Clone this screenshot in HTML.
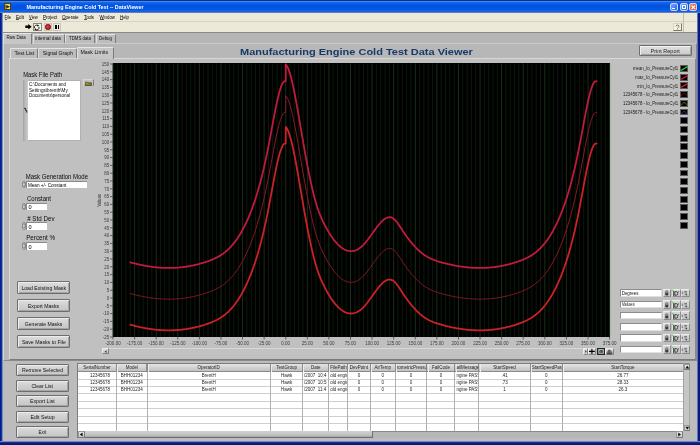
<!DOCTYPE html><html><head><meta charset="utf-8"><style>
*{margin:0;padding:0;box-sizing:border-box}
html,body{width:700px;height:445px;overflow:hidden;background:#bcbcbc;font-family:"Liberation Sans",sans-serif}
div,svg{position:absolute}
text{white-space:pre}
</style></head><body>
<div style="left:0.00px;top:0.00px;width:700.00px;height:13.00px;background:linear-gradient(#002c88 0px,#0a3498 0.7px,#3a88f0 1.5px,#1462e8 2.6px,#0052e0 6px,#0056e6 9.4px,#0a66f6 10.7px,#2a5ab8 11.9px,#8a9cc8 13px)"></div>
<div style="left:3.50px;top:2.50px;width:7.50px;height:7.50px;background:#f0e060;border:0.6px solid #504000"></div>
<svg style="left:3.5px;top:2.5px" width="7.5" height="7.5"><path d="M1.5 1.5L6 3.8L1.5 6z" fill="#202020"/><path d="M2.2 2.8h1.2M2.2 4.8h1.2" stroke="#f0e060" stroke-width="0.5"/></svg>
<div style="left:669.50px;top:2.60px;width:8.30px;height:8.60px;background:linear-gradient(135deg,#7aa6ff,#2a5ee8);border:0.7px solid #c8d8f8;border-radius:2px"></div>
<div style="left:671.50px;top:8.00px;width:3.00px;height:1.00px;background:#fff"></div>
<div style="left:679.50px;top:2.60px;width:8.30px;height:8.60px;background:linear-gradient(135deg,#7aa6ff,#2a5ee8);border:0.7px solid #c8d8f8;border-radius:2px"></div>
<div style="left:681.50px;top:4.50px;width:4.50px;height:4.50px;border:0.8px solid #fff;border-top-width:1.5px"></div>
<div style="left:689.00px;top:2.60px;width:8.30px;height:8.60px;background:linear-gradient(135deg,#f09070,#d04828);border:0.7px solid #c8d8f8;border-radius:2px"></div>
<svg style="left:690px;top:3.5px" width="7" height="7"><path d="M1.6 1.6L5.2 5.2M5.2 1.6L1.6 5.2" stroke="#fff" stroke-width="1.2"/></svg>
<div style="left:0.00px;top:13.00px;width:3.00px;height:432.00px;background:linear-gradient(90deg,#001a78 0%,#0628a0 45%,#3a5cc0 70%,#c8c6c0 100%)"></div>
<div style="left:696.50px;top:13.00px;width:3.50px;height:432.00px;background:linear-gradient(90deg,#b0bce4 0%,#4058b0 22%,#0c1c80 45%,#081670 100%)"></div>
<div style="left:0.00px;top:441.00px;width:700.00px;height:4.00px;background:linear-gradient(#b0bce4 0%,#4058b0 22%,#0c1c80 45%,#081670 100%)"></div>
<div style="left:3.00px;top:13.00px;width:694.00px;height:19.00px;background:#ece9d8"></div>
<div style="left:3.00px;top:21.20px;width:694.00px;height:0.90px;background:#d8d4c2"></div>
<div style="left:4.80px;top:19.20px;width:2.60px;height:0.50px;background:#555"></div>
<div style="left:16.20px;top:19.20px;width:2.60px;height:0.50px;background:#555"></div>
<div style="left:29.20px;top:19.20px;width:3.20px;height:0.50px;background:#555"></div>
<div style="left:43.20px;top:19.20px;width:2.80px;height:0.50px;background:#555"></div>
<div style="left:62.20px;top:19.20px;width:3.60px;height:0.50px;background:#555"></div>
<div style="left:84.20px;top:19.20px;width:2.80px;height:0.50px;background:#555"></div>
<div style="left:99.60px;top:19.20px;width:4.20px;height:0.50px;background:#555"></div>
<div style="left:120.20px;top:19.20px;width:3.00px;height:0.50px;background:#555"></div>
<div style="left:3.00px;top:31.50px;width:694.00px;height:1.00px;background:#8c8a80"></div>
<div style="left:682.50px;top:13.00px;width:1.00px;height:18.50px;background:#c4c0ac"></div>
<svg style="left:24.8px;top:24.3px" width="7" height="5.5"><path d="M0.3 1.5h3v-1.4l3.4 2.65-3.4 2.65v-1.4h-3z" fill="#000"/></svg>
<div style="left:32.50px;top:23.00px;width:9.00px;height:8.20px;background:#f6f4ee;border:0.8px solid #8a8878"></div>
<svg style="left:33.3px;top:23.8px" width="7.5" height="7"><path d="M1.6 4.2A2.2 2.2 0 0 1 5 1.6" fill="none" stroke="#111" stroke-width="0.9"/><path d="M5.9 2.8A2.2 2.2 0 0 1 2.5 5.4" fill="none" stroke="#111" stroke-width="0.9"/><path d="M4.2 0.6L6.2 1.4L4.6 2.8z" fill="#111"/><path d="M3.3 6.4L1.3 5.6L2.9 4.2z" fill="#111"/></svg>
<div style="left:43.50px;top:23.00px;width:8.70px;height:8.20px;background:#eeece2;border:0.8px solid #c8c6b6"></div>
<div style="left:45.30px;top:24.40px;width:5.30px;height:5.30px;background:radial-gradient(circle at 40% 40%,#f04040,#c00000);border-radius:50%;border:0.5px solid #600"></div>
<div style="left:52.80px;top:23.00px;width:8.20px;height:8.20px;background:#eeece2;border:0.8px solid #c8c6b6"></div>
<div style="left:55.00px;top:24.90px;width:1.60px;height:4.60px;background:#000"></div>
<div style="left:57.60px;top:24.90px;width:1.60px;height:4.60px;background:#000"></div>
<div style="left:673.00px;top:22.70px;width:9.00px;height:8.60px;background:#f4f2e8;border:0.7px solid #d8d6c8;border-right-color:#7a7868;border-bottom-color:#7a7868"></div>
<svg style="left:674px;top:23.5px" width="7" height="7"><path d="M2 2.5a1.5 1.5 0 0 1 3 0c0 1-1.5 1-1.5 2.2M3.5 5.6v0.9" fill="none" stroke="#707020" stroke-width="0.9"/></svg>
<div style="left:3.00px;top:32.50px;width:694.00px;height:10.50px;background:#b5b5b5"></div>
<div style="left:2.50px;top:42.80px;width:694.00px;height:317.80px;background:#b7b7b7;border-top:1px solid #cbcbcb;border-left:1px solid #d6d6d6;border-right:1px solid #8a8a8a;border-bottom:1px solid #8a8a8a"></div>
<div style="left:32.50px;top:34.00px;width:32.00px;height:9.00px;background:#bdbdbd;border-top:1px solid #e6e6e6;border-left:1px solid #e0e0e0;border-right:1px solid #7c7c7c;border-radius:1px 1px 0 0"></div>
<div style="left:65.00px;top:34.00px;width:30.00px;height:9.00px;background:#bdbdbd;border-top:1px solid #e6e6e6;border-left:1px solid #e0e0e0;border-right:1px solid #7c7c7c;border-radius:1px 1px 0 0"></div>
<div style="left:95.50px;top:34.00px;width:20.50px;height:9.00px;background:#bdbdbd;border-top:1px solid #e6e6e6;border-left:1px solid #e0e0e0;border-right:1px solid #7c7c7c;border-radius:1px 1px 0 0"></div>
<div style="left:2.50px;top:33.30px;width:29.50px;height:10.50px;background:#c6c6c6;border-top:1px solid #e6e6e6;border-left:1px solid #e0e0e0;border-right:1px solid #7c7c7c;border-radius:1px 1px 0 0"></div>
<div style="left:9.00px;top:57.80px;width:687.00px;height:302.00px;background:#c0c0c0;border-top:1px solid #d8d8d8;border-left:1px solid #d8d8d8;border-right:1px solid #8a8a8a;border-bottom:1px solid #7a7a7a"></div>
<div style="left:10.30px;top:48.00px;width:27.50px;height:10.00px;background:#bdbdbd;border-top:1px solid #e6e6e6;border-left:1px solid #e0e0e0;border-right:1px solid #7c7c7c;border-radius:1px 1px 0 0"></div>
<div style="left:38.00px;top:48.00px;width:38.50px;height:10.00px;background:#bdbdbd;border-top:1px solid #e6e6e6;border-left:1px solid #e0e0e0;border-right:1px solid #7c7c7c;border-radius:1px 1px 0 0"></div>
<div style="left:77.00px;top:47.00px;width:36.50px;height:11.50px;background:#c6c6c6;border-top:1px solid #e6e6e6;border-left:1px solid #e0e0e0;border-right:1px solid #7c7c7c;border-radius:1px 1px 0 0"></div>
<div style="left:24.00px;top:80.00px;width:56.50px;height:60.50px;background:#fff;border:0.8px solid #b0b0b0;border-left:none"></div>
<div style="left:23.40px;top:80.00px;width:5.00px;height:60.50px;background:linear-gradient(90deg,#a0a0a0 0%,#b4b4b4 30%,#c2c2c2 70%,#cacaca 100%)"></div>
<svg style="left:23.4px;top:106px" width="5" height="8"><path d="M1.6 2.2L2.6 2.6L2.6 4.2L3.6 4.8L3.8 6.2" fill="none" stroke="#303030" stroke-width="1.1" stroke-linecap="round"/></svg>
<div style="left:83.00px;top:79.40px;width:10.80px;height:6.90px;background:#c2c2c2;border-top:0.6px solid #d6d6d6;border-left:0.6px solid #d6d6d6;border-right:0.8px solid #7c7c7c;border-bottom:0.6px solid #a8a8a8"></div>
<svg style="left:84.6px;top:80.6px" width="7.5" height="5"><path d="M0.6 1.2h2l0.6 0.6h3.2v2.8h-5.8z" fill="#8a8420" stroke="#2a2a08" stroke-width="0.6"/><path d="M1.2 2.2h1.2" stroke="#d8d070" stroke-width="0.7"/></svg>
<div style="left:21.70px;top:181.40px;width:4.00px;height:6.90px;background:linear-gradient(90deg,#e4e4e4,#b4b4b4);border:0.6px solid #8c8c8c;border-radius:2px"></div>
<svg style="left:21.7px;top:181.4px" width="4" height="6.9"><path d="M0.8 2.85L2 1.25L3.2 2.85M0.8 4.05L2 5.65L3.2 4.05" fill="none" stroke="#666" stroke-width="0.55"/></svg>
<div style="left:26.40px;top:181.40px;width:61.00px;height:6.90px;background:#fff;border-top:0.7px solid #8a8a8a;border-left:0.7px solid #8a8a8a"></div>
<div style="left:21.70px;top:202.60px;width:4.00px;height:7.60px;background:linear-gradient(90deg,#e4e4e4,#b4b4b4);border:0.6px solid #8c8c8c;border-radius:2px"></div>
<svg style="left:21.7px;top:202.6px" width="4" height="7.6"><path d="M0.8 3.1999999999999997L2 1.5999999999999996L3.2 3.1999999999999997M0.8 4.3999999999999995L2 6.0L3.2 4.3999999999999995" fill="none" stroke="#666" stroke-width="0.55"/></svg>
<div style="left:26.40px;top:202.60px;width:21.00px;height:7.60px;background:#fff;border-top:0.7px solid #8a8a8a;border-left:0.7px solid #8a8a8a"></div>
<div style="left:21.70px;top:222.20px;width:4.00px;height:7.60px;background:linear-gradient(90deg,#e4e4e4,#b4b4b4);border:0.6px solid #8c8c8c;border-radius:2px"></div>
<svg style="left:21.7px;top:222.2px" width="4" height="7.6"><path d="M0.8 3.1999999999999997L2 1.5999999999999996L3.2 3.1999999999999997M0.8 4.3999999999999995L2 6.0L3.2 4.3999999999999995" fill="none" stroke="#666" stroke-width="0.55"/></svg>
<div style="left:26.40px;top:222.20px;width:21.00px;height:7.60px;background:#fff;border-top:0.7px solid #8a8a8a;border-left:0.7px solid #8a8a8a"></div>
<div style="left:21.70px;top:242.20px;width:4.00px;height:7.60px;background:linear-gradient(90deg,#e4e4e4,#b4b4b4);border:0.6px solid #8c8c8c;border-radius:2px"></div>
<svg style="left:21.7px;top:242.2px" width="4" height="7.6"><path d="M0.8 3.1999999999999997L2 1.5999999999999996L3.2 3.1999999999999997M0.8 4.3999999999999995L2 6.0L3.2 4.3999999999999995" fill="none" stroke="#666" stroke-width="0.55"/></svg>
<div style="left:26.40px;top:242.20px;width:21.00px;height:7.60px;background:#fff;border-top:0.7px solid #8a8a8a;border-left:0.7px solid #8a8a8a"></div>
<div style="left:17.10px;top:281.40px;width:53.40px;height:12.20px;background:linear-gradient(#dedede,#cfcfcf 50%,#c6c6c6);border:1px solid #6e6e6e;border-radius:1px;box-shadow:inset 1px 1px 0 #ececec,inset -1px -1px 0 #a4a4a4"></div>
<div style="left:17.10px;top:299.30px;width:53.40px;height:12.40px;background:linear-gradient(#dedede,#cfcfcf 50%,#c6c6c6);border:1px solid #6e6e6e;border-radius:1px;box-shadow:inset 1px 1px 0 #ececec,inset -1px -1px 0 #a4a4a4"></div>
<div style="left:17.10px;top:317.40px;width:53.40px;height:12.40px;background:linear-gradient(#dedede,#cfcfcf 50%,#c6c6c6);border:1px solid #6e6e6e;border-radius:1px;box-shadow:inset 1px 1px 0 #ececec,inset -1px -1px 0 #a4a4a4"></div>
<div style="left:17.10px;top:335.20px;width:53.40px;height:12.60px;background:linear-gradient(#dedede,#cfcfcf 50%,#c6c6c6);border:1px solid #6e6e6e;border-radius:1px;box-shadow:inset 1px 1px 0 #ececec,inset -1px -1px 0 #a4a4a4"></div>
<div style="left:16.20px;top:364.10px;width:52.60px;height:12.20px;background:linear-gradient(#dedede,#cfcfcf 50%,#c6c6c6);border:1px solid #6e6e6e;border-radius:1px;box-shadow:inset 1px 1px 0 #ececec,inset -1px -1px 0 #a4a4a4"></div>
<div style="left:16.20px;top:379.70px;width:52.60px;height:12.10px;background:linear-gradient(#dedede,#cfcfcf 50%,#c6c6c6);border:1px solid #6e6e6e;border-radius:1px;box-shadow:inset 1px 1px 0 #ececec,inset -1px -1px 0 #a4a4a4"></div>
<div style="left:16.20px;top:395.00px;width:52.60px;height:12.20px;background:linear-gradient(#dedede,#cfcfcf 50%,#c6c6c6);border:1px solid #6e6e6e;border-radius:1px;box-shadow:inset 1px 1px 0 #ececec,inset -1px -1px 0 #a4a4a4"></div>
<div style="left:16.20px;top:410.70px;width:52.60px;height:12.10px;background:linear-gradient(#dedede,#cfcfcf 50%,#c6c6c6);border:1px solid #6e6e6e;border-radius:1px;box-shadow:inset 1px 1px 0 #ececec,inset -1px -1px 0 #a4a4a4"></div>
<div style="left:16.20px;top:425.90px;width:52.60px;height:12.10px;background:linear-gradient(#dedede,#cfcfcf 50%,#c6c6c6);border:1px solid #6e6e6e;border-radius:1px;box-shadow:inset 1px 1px 0 #ececec,inset -1px -1px 0 #a4a4a4"></div>
<div style="left:112.80px;top:63.30px;width:496.80px;height:273.70px;background:#000"></div>
<svg style="left:0;top:0" width="700" height="445">
<clipPath id="pc"><rect x="112.8" y="63.3" width="496.80" height="273.70"/></clipPath>
<line x1="113.00" y1="63.3" x2="113.00" y2="337.0" stroke="#182f18" stroke-width="1"/>
<line x1="117.32" y1="63.3" x2="117.32" y2="337.0" stroke="#0b190b" stroke-width="1"/>
<line x1="121.64" y1="63.3" x2="121.64" y2="337.0" stroke="#0b190b" stroke-width="1"/>
<line x1="125.95" y1="63.3" x2="125.95" y2="337.0" stroke="#0b190b" stroke-width="1"/>
<line x1="130.27" y1="63.3" x2="130.27" y2="337.0" stroke="#0b190b" stroke-width="1"/>
<line x1="134.59" y1="63.3" x2="134.59" y2="337.0" stroke="#182f18" stroke-width="1"/>
<line x1="138.91" y1="63.3" x2="138.91" y2="337.0" stroke="#0b190b" stroke-width="1"/>
<line x1="143.23" y1="63.3" x2="143.23" y2="337.0" stroke="#0b190b" stroke-width="1"/>
<line x1="147.55" y1="63.3" x2="147.55" y2="337.0" stroke="#0b190b" stroke-width="1"/>
<line x1="151.86" y1="63.3" x2="151.86" y2="337.0" stroke="#0b190b" stroke-width="1"/>
<line x1="156.18" y1="63.3" x2="156.18" y2="337.0" stroke="#182f18" stroke-width="1"/>
<line x1="160.50" y1="63.3" x2="160.50" y2="337.0" stroke="#0b190b" stroke-width="1"/>
<line x1="164.82" y1="63.3" x2="164.82" y2="337.0" stroke="#0b190b" stroke-width="1"/>
<line x1="169.14" y1="63.3" x2="169.14" y2="337.0" stroke="#0b190b" stroke-width="1"/>
<line x1="173.46" y1="63.3" x2="173.46" y2="337.0" stroke="#0b190b" stroke-width="1"/>
<line x1="177.77" y1="63.3" x2="177.77" y2="337.0" stroke="#182f18" stroke-width="1"/>
<line x1="182.09" y1="63.3" x2="182.09" y2="337.0" stroke="#0b190b" stroke-width="1"/>
<line x1="186.41" y1="63.3" x2="186.41" y2="337.0" stroke="#0b190b" stroke-width="1"/>
<line x1="190.73" y1="63.3" x2="190.73" y2="337.0" stroke="#0b190b" stroke-width="1"/>
<line x1="195.05" y1="63.3" x2="195.05" y2="337.0" stroke="#0b190b" stroke-width="1"/>
<line x1="199.37" y1="63.3" x2="199.37" y2="337.0" stroke="#182f18" stroke-width="1"/>
<line x1="203.68" y1="63.3" x2="203.68" y2="337.0" stroke="#0b190b" stroke-width="1"/>
<line x1="208.00" y1="63.3" x2="208.00" y2="337.0" stroke="#0b190b" stroke-width="1"/>
<line x1="212.32" y1="63.3" x2="212.32" y2="337.0" stroke="#0b190b" stroke-width="1"/>
<line x1="216.64" y1="63.3" x2="216.64" y2="337.0" stroke="#0b190b" stroke-width="1"/>
<line x1="220.96" y1="63.3" x2="220.96" y2="337.0" stroke="#182f18" stroke-width="1"/>
<line x1="225.27" y1="63.3" x2="225.27" y2="337.0" stroke="#0b190b" stroke-width="1"/>
<line x1="229.59" y1="63.3" x2="229.59" y2="337.0" stroke="#0b190b" stroke-width="1"/>
<line x1="233.91" y1="63.3" x2="233.91" y2="337.0" stroke="#0b190b" stroke-width="1"/>
<line x1="238.23" y1="63.3" x2="238.23" y2="337.0" stroke="#0b190b" stroke-width="1"/>
<line x1="242.55" y1="63.3" x2="242.55" y2="337.0" stroke="#182f18" stroke-width="1"/>
<line x1="246.87" y1="63.3" x2="246.87" y2="337.0" stroke="#0b190b" stroke-width="1"/>
<line x1="251.18" y1="63.3" x2="251.18" y2="337.0" stroke="#0b190b" stroke-width="1"/>
<line x1="255.50" y1="63.3" x2="255.50" y2="337.0" stroke="#0b190b" stroke-width="1"/>
<line x1="259.82" y1="63.3" x2="259.82" y2="337.0" stroke="#0b190b" stroke-width="1"/>
<line x1="264.14" y1="63.3" x2="264.14" y2="337.0" stroke="#182f18" stroke-width="1"/>
<line x1="268.46" y1="63.3" x2="268.46" y2="337.0" stroke="#0b190b" stroke-width="1"/>
<line x1="272.78" y1="63.3" x2="272.78" y2="337.0" stroke="#0b190b" stroke-width="1"/>
<line x1="277.09" y1="63.3" x2="277.09" y2="337.0" stroke="#0b190b" stroke-width="1"/>
<line x1="281.41" y1="63.3" x2="281.41" y2="337.0" stroke="#0b190b" stroke-width="1"/>
<line x1="285.73" y1="63.3" x2="285.73" y2="337.0" stroke="#182f18" stroke-width="1"/>
<line x1="290.05" y1="63.3" x2="290.05" y2="337.0" stroke="#0b190b" stroke-width="1"/>
<line x1="294.37" y1="63.3" x2="294.37" y2="337.0" stroke="#0b190b" stroke-width="1"/>
<line x1="298.69" y1="63.3" x2="298.69" y2="337.0" stroke="#0b190b" stroke-width="1"/>
<line x1="303.00" y1="63.3" x2="303.00" y2="337.0" stroke="#0b190b" stroke-width="1"/>
<line x1="307.32" y1="63.3" x2="307.32" y2="337.0" stroke="#182f18" stroke-width="1"/>
<line x1="311.64" y1="63.3" x2="311.64" y2="337.0" stroke="#0b190b" stroke-width="1"/>
<line x1="315.96" y1="63.3" x2="315.96" y2="337.0" stroke="#0b190b" stroke-width="1"/>
<line x1="320.28" y1="63.3" x2="320.28" y2="337.0" stroke="#0b190b" stroke-width="1"/>
<line x1="324.59" y1="63.3" x2="324.59" y2="337.0" stroke="#0b190b" stroke-width="1"/>
<line x1="328.91" y1="63.3" x2="328.91" y2="337.0" stroke="#182f18" stroke-width="1"/>
<line x1="333.23" y1="63.3" x2="333.23" y2="337.0" stroke="#0b190b" stroke-width="1"/>
<line x1="337.55" y1="63.3" x2="337.55" y2="337.0" stroke="#0b190b" stroke-width="1"/>
<line x1="341.87" y1="63.3" x2="341.87" y2="337.0" stroke="#0b190b" stroke-width="1"/>
<line x1="346.19" y1="63.3" x2="346.19" y2="337.0" stroke="#0b190b" stroke-width="1"/>
<line x1="350.50" y1="63.3" x2="350.50" y2="337.0" stroke="#182f18" stroke-width="1"/>
<line x1="354.82" y1="63.3" x2="354.82" y2="337.0" stroke="#0b190b" stroke-width="1"/>
<line x1="359.14" y1="63.3" x2="359.14" y2="337.0" stroke="#0b190b" stroke-width="1"/>
<line x1="363.46" y1="63.3" x2="363.46" y2="337.0" stroke="#0b190b" stroke-width="1"/>
<line x1="367.78" y1="63.3" x2="367.78" y2="337.0" stroke="#0b190b" stroke-width="1"/>
<line x1="372.10" y1="63.3" x2="372.10" y2="337.0" stroke="#182f18" stroke-width="1"/>
<line x1="376.41" y1="63.3" x2="376.41" y2="337.0" stroke="#0b190b" stroke-width="1"/>
<line x1="380.73" y1="63.3" x2="380.73" y2="337.0" stroke="#0b190b" stroke-width="1"/>
<line x1="385.05" y1="63.3" x2="385.05" y2="337.0" stroke="#0b190b" stroke-width="1"/>
<line x1="389.37" y1="63.3" x2="389.37" y2="337.0" stroke="#0b190b" stroke-width="1"/>
<line x1="393.69" y1="63.3" x2="393.69" y2="337.0" stroke="#182f18" stroke-width="1"/>
<line x1="398.01" y1="63.3" x2="398.01" y2="337.0" stroke="#0b190b" stroke-width="1"/>
<line x1="402.32" y1="63.3" x2="402.32" y2="337.0" stroke="#0b190b" stroke-width="1"/>
<line x1="406.64" y1="63.3" x2="406.64" y2="337.0" stroke="#0b190b" stroke-width="1"/>
<line x1="410.96" y1="63.3" x2="410.96" y2="337.0" stroke="#0b190b" stroke-width="1"/>
<line x1="415.28" y1="63.3" x2="415.28" y2="337.0" stroke="#182f18" stroke-width="1"/>
<line x1="419.60" y1="63.3" x2="419.60" y2="337.0" stroke="#0b190b" stroke-width="1"/>
<line x1="423.91" y1="63.3" x2="423.91" y2="337.0" stroke="#0b190b" stroke-width="1"/>
<line x1="428.23" y1="63.3" x2="428.23" y2="337.0" stroke="#0b190b" stroke-width="1"/>
<line x1="432.55" y1="63.3" x2="432.55" y2="337.0" stroke="#0b190b" stroke-width="1"/>
<line x1="436.87" y1="63.3" x2="436.87" y2="337.0" stroke="#182f18" stroke-width="1"/>
<line x1="441.19" y1="63.3" x2="441.19" y2="337.0" stroke="#0b190b" stroke-width="1"/>
<line x1="445.51" y1="63.3" x2="445.51" y2="337.0" stroke="#0b190b" stroke-width="1"/>
<line x1="449.82" y1="63.3" x2="449.82" y2="337.0" stroke="#0b190b" stroke-width="1"/>
<line x1="454.14" y1="63.3" x2="454.14" y2="337.0" stroke="#0b190b" stroke-width="1"/>
<line x1="458.46" y1="63.3" x2="458.46" y2="337.0" stroke="#182f18" stroke-width="1"/>
<line x1="462.78" y1="63.3" x2="462.78" y2="337.0" stroke="#0b190b" stroke-width="1"/>
<line x1="467.10" y1="63.3" x2="467.10" y2="337.0" stroke="#0b190b" stroke-width="1"/>
<line x1="471.42" y1="63.3" x2="471.42" y2="337.0" stroke="#0b190b" stroke-width="1"/>
<line x1="475.73" y1="63.3" x2="475.73" y2="337.0" stroke="#0b190b" stroke-width="1"/>
<line x1="480.05" y1="63.3" x2="480.05" y2="337.0" stroke="#182f18" stroke-width="1"/>
<line x1="484.37" y1="63.3" x2="484.37" y2="337.0" stroke="#0b190b" stroke-width="1"/>
<line x1="488.69" y1="63.3" x2="488.69" y2="337.0" stroke="#0b190b" stroke-width="1"/>
<line x1="493.01" y1="63.3" x2="493.01" y2="337.0" stroke="#0b190b" stroke-width="1"/>
<line x1="497.33" y1="63.3" x2="497.33" y2="337.0" stroke="#0b190b" stroke-width="1"/>
<line x1="501.64" y1="63.3" x2="501.64" y2="337.0" stroke="#182f18" stroke-width="1"/>
<line x1="505.96" y1="63.3" x2="505.96" y2="337.0" stroke="#0b190b" stroke-width="1"/>
<line x1="510.28" y1="63.3" x2="510.28" y2="337.0" stroke="#0b190b" stroke-width="1"/>
<line x1="514.60" y1="63.3" x2="514.60" y2="337.0" stroke="#0b190b" stroke-width="1"/>
<line x1="518.92" y1="63.3" x2="518.92" y2="337.0" stroke="#0b190b" stroke-width="1"/>
<line x1="523.23" y1="63.3" x2="523.23" y2="337.0" stroke="#182f18" stroke-width="1"/>
<line x1="527.55" y1="63.3" x2="527.55" y2="337.0" stroke="#0b190b" stroke-width="1"/>
<line x1="531.87" y1="63.3" x2="531.87" y2="337.0" stroke="#0b190b" stroke-width="1"/>
<line x1="536.19" y1="63.3" x2="536.19" y2="337.0" stroke="#0b190b" stroke-width="1"/>
<line x1="540.51" y1="63.3" x2="540.51" y2="337.0" stroke="#0b190b" stroke-width="1"/>
<line x1="544.83" y1="63.3" x2="544.83" y2="337.0" stroke="#182f18" stroke-width="1"/>
<line x1="549.14" y1="63.3" x2="549.14" y2="337.0" stroke="#0b190b" stroke-width="1"/>
<line x1="553.46" y1="63.3" x2="553.46" y2="337.0" stroke="#0b190b" stroke-width="1"/>
<line x1="557.78" y1="63.3" x2="557.78" y2="337.0" stroke="#0b190b" stroke-width="1"/>
<line x1="562.10" y1="63.3" x2="562.10" y2="337.0" stroke="#0b190b" stroke-width="1"/>
<line x1="566.42" y1="63.3" x2="566.42" y2="337.0" stroke="#182f18" stroke-width="1"/>
<line x1="570.74" y1="63.3" x2="570.74" y2="337.0" stroke="#0b190b" stroke-width="1"/>
<line x1="575.05" y1="63.3" x2="575.05" y2="337.0" stroke="#0b190b" stroke-width="1"/>
<line x1="579.37" y1="63.3" x2="579.37" y2="337.0" stroke="#0b190b" stroke-width="1"/>
<line x1="583.69" y1="63.3" x2="583.69" y2="337.0" stroke="#0b190b" stroke-width="1"/>
<line x1="588.01" y1="63.3" x2="588.01" y2="337.0" stroke="#182f18" stroke-width="1"/>
<line x1="592.33" y1="63.3" x2="592.33" y2="337.0" stroke="#0b190b" stroke-width="1"/>
<line x1="596.65" y1="63.3" x2="596.65" y2="337.0" stroke="#0b190b" stroke-width="1"/>
<line x1="600.96" y1="63.3" x2="600.96" y2="337.0" stroke="#0b190b" stroke-width="1"/>
<line x1="605.28" y1="63.3" x2="605.28" y2="337.0" stroke="#0b190b" stroke-width="1"/>
<line x1="609.60" y1="63.3" x2="609.60" y2="337.0" stroke="#182f18" stroke-width="1"/>
<g clip-path="url(#pc)" fill="none" stroke-linejoin="round" stroke-linecap="round">
<path d="M130.27 293.50 L131.14 293.74 L132.00 293.98 L132.86 294.21 L133.73 294.44 L134.59 294.66 L135.45 294.88 L136.32 295.09 L137.18 295.30 L138.05 295.50 L138.91 295.69 L139.77 295.89 L140.64 296.07 L141.50 296.25 L142.36 296.43 L143.23 296.60 L144.09 296.77 L144.96 296.93 L145.82 297.08 L146.68 297.23 L147.55 297.38 L148.41 297.52 L149.27 297.65 L150.14 297.78 L151.00 297.90 L151.86 298.02 L152.73 298.13 L153.59 298.23 L154.46 298.33 L155.32 298.43 L156.18 298.52 L157.05 298.60 L157.91 298.68 L158.77 298.75 L159.64 298.81 L160.50 298.87 L161.36 298.93 L162.23 298.98 L163.09 299.02 L163.96 299.05 L164.82 299.08 L165.68 299.11 L166.55 299.13 L167.41 299.14 L168.27 299.15 L169.14 299.15 L170.00 299.14 L170.86 299.13 L171.73 299.11 L172.59 299.09 L173.46 299.06 L174.32 299.02 L175.18 298.98 L176.05 298.93 L176.91 298.87 L177.77 298.81 L178.64 298.74 L179.50 298.66 L180.36 298.58 L181.23 298.50 L182.09 298.40 L182.96 298.30 L183.82 298.19 L184.68 298.08 L185.55 297.96 L186.41 297.83 L187.27 297.70 L188.14 297.55 L189.00 297.41 L189.87 297.25 L190.73 297.09 L191.59 296.92 L192.46 296.75 L193.32 296.57 L194.18 296.38 L195.05 296.18 L195.91 295.98 L196.77 295.77 L197.64 295.55 L198.50 295.33 L199.37 295.10 L200.23 294.86 L201.09 294.62 L201.96 294.36 L202.82 294.11 L203.68 293.84 L204.55 293.57 L205.41 293.28 L206.27 293.00 L207.14 292.70 L208.00 292.40 L208.87 292.09 L209.73 291.77 L210.59 291.44 L211.46 291.10 L212.32 290.75 L213.18 290.38 L214.05 290.00 L214.91 289.60 L215.77 289.19 L216.64 288.76 L217.50 288.30 L218.37 287.83 L219.23 287.34 L220.09 286.82 L220.96 286.27 L221.82 285.71 L222.68 285.11 L223.55 284.49 L224.41 283.83 L225.27 283.15 L226.14 282.43 L227.00 281.68 L227.87 280.90 L228.73 280.08 L229.59 279.22 L230.46 278.33 L231.32 277.39 L232.18 276.42 L233.05 275.40 L233.91 274.34 L234.77 273.24 L235.64 272.09 L236.50 270.89 L237.37 269.65 L238.23 268.35 L239.09 267.01 L239.96 265.61 L240.82 264.16 L241.68 262.66 L242.55 261.10 L243.41 259.49 L244.28 257.82 L245.14 256.09 L246.00 254.30 L246.87 252.44 L247.73 250.53 L248.59 248.54 L249.46 246.49 L250.32 244.37 L251.18 242.17 L252.05 239.90 L252.91 237.54 L253.78 235.10 L254.64 232.56 L255.50 229.94 L256.37 227.23 L257.23 224.42 L258.09 221.50 L258.96 218.49 L259.82 215.36 L260.68 212.13 L261.55 208.79 L262.41 205.33 L263.28 201.75 L264.14 198.04 L265.00 194.22 L265.87 190.26 L266.73 186.17 L267.59 181.95 L268.46 177.59 L269.32 173.10 L270.18 168.50 L271.05 163.84 L271.91 159.16 L272.78 154.49 L273.64 149.87 L274.50 145.34 L275.37 140.95 L276.23 136.72 L277.09 132.70 L277.96 128.93 L278.82 125.45 L279.68 122.28 L280.55 119.48 L281.41 117.09 L282.28 115.13 L283.14 113.65 L284.00 112.69 L284.87 112.29 L285.73 112.48 L285.73 95.64 L286.59 96.67 L287.46 98.16 L288.32 100.10 L289.19 102.45 L290.05 105.17 L290.91 108.25 L291.78 111.65 L292.64 115.35 L293.50 119.32 L294.37 123.52 L295.23 127.94 L296.09 132.53 L296.96 137.28 L297.82 142.15 L298.69 147.12 L299.55 152.16 L300.41 157.24 L301.28 162.32 L302.14 167.39 L303.00 172.42 L303.87 177.37 L304.73 182.24 L305.59 187.01 L306.46 191.69 L307.32 196.26 L308.19 200.71 L309.05 205.04 L309.91 209.23 L310.78 213.29 L311.64 217.19 L312.50 220.93 L313.37 224.51 L314.23 227.91 L315.09 231.13 L315.96 234.16 L316.82 236.99 L317.69 239.64 L318.55 242.12 L319.41 244.44 L320.28 246.62 L321.14 248.67 L322.00 250.62 L322.87 252.47 L323.73 254.24 L324.59 255.95 L325.46 257.60 L326.32 259.20 L327.19 260.75 L328.05 262.25 L328.91 263.70 L329.78 265.10 L330.64 266.44 L331.50 267.74 L332.37 268.98 L333.23 270.16 L334.09 271.30 L334.96 272.38 L335.82 273.40 L336.69 274.37 L337.55 275.29 L338.41 276.15 L339.28 276.96 L340.14 277.72 L341.00 278.41 L341.87 279.05 L342.73 279.64 L343.60 280.17 L344.46 280.64 L345.32 281.05 L346.19 281.41 L347.05 281.71 L347.91 281.95 L348.78 282.13 L349.64 282.25 L350.50 282.32 L351.37 282.32 L352.23 282.27 L353.10 282.16 L353.96 281.98 L354.82 281.75 L355.69 281.45 L356.55 281.10 L357.41 280.68 L358.28 280.20 L359.14 279.66 L360.00 279.05 L360.87 278.39 L361.73 277.66 L362.60 276.87 L363.46 276.01 L364.32 275.09 L365.19 274.12 L366.05 273.09 L366.91 272.01 L367.78 270.90 L368.64 269.76 L369.50 268.59 L370.37 267.39 L371.23 266.19 L372.10 264.97 L372.96 263.75 L373.82 262.54 L374.69 261.34 L375.55 260.15 L376.41 258.98 L377.28 257.85 L378.14 256.75 L379.00 255.68 L379.87 254.67 L380.73 253.71 L381.60 252.81 L382.46 251.97 L383.32 251.21 L384.19 250.52 L385.05 249.92 L385.91 249.41 L386.78 248.99 L387.64 248.68 L388.51 248.48 L389.37 248.39 L390.23 248.43 L391.10 248.59 L391.96 248.89 L392.82 249.34 L393.69 249.93 L394.55 250.67 L395.41 251.55 L396.28 252.55 L397.14 253.65 L398.01 254.84 L398.87 256.08 L399.73 257.38 L400.60 258.71 L401.46 260.04 L402.32 261.37 L403.19 262.68 L404.05 263.96 L404.91 265.22 L405.78 266.45 L406.64 267.65 L407.51 268.83 L408.37 269.98 L409.23 271.11 L410.10 272.20 L410.96 273.27 L411.82 274.32 L412.69 275.33 L413.55 276.32 L414.41 277.27 L415.28 278.20 L416.14 279.10 L417.01 279.97 L417.87 280.81 L418.73 281.62 L419.60 282.41 L420.46 283.16 L421.32 283.88 L422.19 284.56 L423.05 285.22 L423.91 285.85 L424.78 286.44 L425.64 287.01 L426.51 287.54 L427.37 288.05 L428.23 288.53 L429.10 288.99 L429.96 289.42 L430.82 289.83 L431.69 290.22 L432.55 290.59 L433.41 290.94 L434.28 291.27 L435.14 291.59 L436.01 291.90 L436.87 292.19 L437.73 292.47 L438.60 292.74 L439.46 293.00 L440.32 293.25 L441.19 293.50 L442.05 293.74 L442.92 293.98 L443.78 294.21 L444.64 294.44 L445.51 294.66 L446.37 294.88 L447.23 295.09 L448.10 295.30 L448.96 295.50 L449.82 295.69 L450.69 295.89 L451.55 296.07 L452.42 296.25 L453.28 296.43 L454.14 296.60 L455.01 296.77 L455.87 296.93 L456.73 297.08 L457.60 297.23 L458.46 297.38 L459.32 297.52 L460.19 297.65 L461.05 297.78 L461.92 297.90 L462.78 298.02 L463.64 298.13 L464.51 298.23 L465.37 298.33 L466.23 298.43 L467.10 298.52 L467.96 298.60 L468.82 298.68 L469.69 298.75 L470.55 298.81 L471.42 298.87 L472.28 298.93 L473.14 298.98 L474.01 299.02 L474.87 299.05 L475.73 299.08 L476.60 299.11 L477.46 299.13 L478.32 299.14 L479.19 299.15 L480.05 299.15 L480.92 299.14 L481.78 299.13 L482.64 299.11 L483.51 299.09 L484.37 299.06 L485.23 299.02 L486.10 298.98 L486.96 298.93 L487.83 298.87 L488.69 298.81 L489.55 298.74 L490.42 298.66 L491.28 298.58 L492.14 298.50 L493.01 298.40 L493.87 298.30 L494.73 298.19 L495.60 298.08 L496.46 297.96 L497.33 297.83 L498.19 297.70 L499.05 297.55 L499.92 297.41 L500.78 297.25 L501.64 297.09 L502.51 296.92 L503.37 296.75 L504.23 296.57 L505.10 296.38 L505.96 296.18 L506.83 295.98 L507.69 295.77 L508.55 295.55 L509.42 295.33 L510.28 295.10 L511.14 294.86 L512.01 294.62 L512.87 294.36 L513.73 294.11 L514.60 293.84 L515.46 293.57 L516.33 293.28 L517.19 293.00 L518.05 292.70 L518.92 292.40 L519.78 292.09 L520.64 291.77 L521.51 291.44 L522.37 291.10 L523.23 290.75 L524.10 290.38 L524.96 290.00 L525.83 289.60 L526.69 289.19 L527.55 288.76 L528.42 288.30 L529.28 287.83 L530.14 287.34 L531.01 286.82 L531.87 286.27 L532.73 285.71 L533.60 285.11 L534.46 284.49 L535.33 283.83 L536.19 283.15 L537.05 282.43 L537.92 281.68 L538.78 280.90 L539.64 280.08 L540.51 279.22 L541.37 278.33 L542.24 277.39 L543.10 276.42 L543.96 275.40 L544.83 274.34 L545.69 273.24 L546.55 272.09 L547.42 270.89 L548.28 269.65 L549.14 268.35 L550.01 267.01 L550.87 265.61 L551.74 264.16 L552.60 262.66 L553.46 261.10 L554.33 259.49 L555.19 257.82 L556.05 256.09 L556.92 254.30 L557.78 252.44 L558.64 250.53 L559.51 248.54 L560.37 246.49 L561.24 244.37 L562.10 242.17 L562.96 239.90 L563.83 237.54 L564.69 235.10 L565.55 232.56 L566.42 229.94 L567.28 227.23 L568.14 224.42 L569.01 221.50 L569.87 218.49 L570.74 215.36 L571.60 212.13 L572.46 208.79 L573.33 205.33 L574.19 201.75 L575.05 198.04 L575.92 194.22 L576.78 190.26 L577.64 186.17 L578.51 181.95 L579.37 177.59 L580.24 173.10 L581.10 168.50 L581.96 163.84 L582.83 159.16 L583.69 154.49 L584.55 149.87 L585.42 145.34 L586.28 140.95 L587.15 136.72 L588.01 132.70 L588.87 128.93 L589.74 125.45 L590.60 122.28 L591.46 119.48 L592.33 117.09 L593.19 115.13 L594.05 113.65 L594.92 112.69 L595.78 112.29 L596.65 112.48" stroke="#8a1a24" stroke-width="1.0"/>
<path d="M130.27 262.30 L131.14 262.54 L132.00 262.78 L132.86 263.01 L133.73 263.24 L134.59 263.46 L135.45 263.68 L136.32 263.89 L137.18 264.10 L138.05 264.30 L138.91 264.49 L139.77 264.69 L140.64 264.87 L141.50 265.05 L142.36 265.23 L143.23 265.40 L144.09 265.57 L144.96 265.73 L145.82 265.88 L146.68 266.03 L147.55 266.18 L148.41 266.32 L149.27 266.45 L150.14 266.58 L151.00 266.70 L151.86 266.82 L152.73 266.93 L153.59 267.03 L154.46 267.13 L155.32 267.23 L156.18 267.32 L157.05 267.40 L157.91 267.48 L158.77 267.55 L159.64 267.61 L160.50 267.67 L161.36 267.73 L162.23 267.78 L163.09 267.82 L163.96 267.85 L164.82 267.88 L165.68 267.91 L166.55 267.93 L167.41 267.94 L168.27 267.95 L169.14 267.95 L170.00 267.94 L170.86 267.93 L171.73 267.91 L172.59 267.89 L173.46 267.86 L174.32 267.82 L175.18 267.78 L176.05 267.73 L176.91 267.67 L177.77 267.61 L178.64 267.54 L179.50 267.46 L180.36 267.38 L181.23 267.30 L182.09 267.20 L182.96 267.10 L183.82 266.99 L184.68 266.88 L185.55 266.76 L186.41 266.63 L187.27 266.50 L188.14 266.35 L189.00 266.21 L189.87 266.05 L190.73 265.89 L191.59 265.72 L192.46 265.55 L193.32 265.37 L194.18 265.18 L195.05 264.98 L195.91 264.78 L196.77 264.57 L197.64 264.35 L198.50 264.13 L199.37 263.90 L200.23 263.66 L201.09 263.42 L201.96 263.16 L202.82 262.91 L203.68 262.64 L204.55 262.37 L205.41 262.08 L206.27 261.80 L207.14 261.50 L208.00 261.20 L208.87 260.89 L209.73 260.57 L210.59 260.24 L211.46 259.90 L212.32 259.55 L213.18 259.18 L214.05 258.80 L214.91 258.40 L215.77 257.99 L216.64 257.56 L217.50 257.10 L218.37 256.63 L219.23 256.14 L220.09 255.62 L220.96 255.07 L221.82 254.51 L222.68 253.91 L223.55 253.29 L224.41 252.63 L225.27 251.95 L226.14 251.23 L227.00 250.48 L227.87 249.70 L228.73 248.88 L229.59 248.02 L230.46 247.13 L231.32 246.19 L232.18 245.22 L233.05 244.20 L233.91 243.14 L234.77 242.04 L235.64 240.89 L236.50 239.69 L237.37 238.45 L238.23 237.15 L239.09 235.81 L239.96 234.41 L240.82 232.96 L241.68 231.46 L242.55 229.90 L243.41 228.29 L244.28 226.62 L245.14 224.89 L246.00 223.10 L246.87 221.24 L247.73 219.33 L248.59 217.34 L249.46 215.29 L250.32 213.17 L251.18 210.97 L252.05 208.70 L252.91 206.34 L253.78 203.90 L254.64 201.36 L255.50 198.74 L256.37 196.03 L257.23 193.22 L258.09 190.30 L258.96 187.29 L259.82 184.16 L260.68 180.93 L261.55 177.59 L262.41 174.13 L263.28 170.55 L264.14 166.84 L265.00 163.02 L265.87 159.06 L266.73 154.97 L267.59 150.75 L268.46 146.39 L269.32 141.90 L270.18 137.30 L271.05 132.64 L271.91 127.96 L272.78 123.29 L273.64 118.67 L274.50 114.14 L275.37 109.75 L276.23 105.52 L277.09 101.50 L277.96 97.73 L278.82 94.25 L279.68 91.08 L280.55 88.28 L281.41 85.89 L282.28 83.93 L283.14 82.45 L284.00 81.49 L284.87 81.09 L285.73 81.28 L285.73 64.44 L286.59 65.47 L287.46 66.96 L288.32 68.90 L289.19 71.25 L290.05 73.97 L290.91 77.05 L291.78 80.45 L292.64 84.15 L293.50 88.12 L294.37 92.32 L295.23 96.74 L296.09 101.33 L296.96 106.08 L297.82 110.95 L298.69 115.92 L299.55 120.96 L300.41 126.04 L301.28 131.12 L302.14 136.19 L303.00 141.22 L303.87 146.17 L304.73 151.04 L305.59 155.81 L306.46 160.49 L307.32 165.06 L308.19 169.51 L309.05 173.84 L309.91 178.03 L310.78 182.09 L311.64 185.99 L312.50 189.73 L313.37 193.31 L314.23 196.71 L315.09 199.93 L315.96 202.96 L316.82 205.79 L317.69 208.44 L318.55 210.92 L319.41 213.24 L320.28 215.42 L321.14 217.47 L322.00 219.42 L322.87 221.27 L323.73 223.04 L324.59 224.75 L325.46 226.40 L326.32 228.00 L327.19 229.55 L328.05 231.05 L328.91 232.50 L329.78 233.90 L330.64 235.24 L331.50 236.54 L332.37 237.78 L333.23 238.96 L334.09 240.10 L334.96 241.18 L335.82 242.20 L336.69 243.17 L337.55 244.09 L338.41 244.95 L339.28 245.76 L340.14 246.52 L341.00 247.21 L341.87 247.85 L342.73 248.44 L343.60 248.97 L344.46 249.44 L345.32 249.85 L346.19 250.21 L347.05 250.51 L347.91 250.75 L348.78 250.93 L349.64 251.05 L350.50 251.12 L351.37 251.12 L352.23 251.07 L353.10 250.96 L353.96 250.78 L354.82 250.55 L355.69 250.25 L356.55 249.90 L357.41 249.48 L358.28 249.00 L359.14 248.46 L360.00 247.85 L360.87 247.19 L361.73 246.46 L362.60 245.67 L363.46 244.81 L364.32 243.89 L365.19 242.92 L366.05 241.89 L366.91 240.81 L367.78 239.70 L368.64 238.56 L369.50 237.39 L370.37 236.19 L371.23 234.99 L372.10 233.77 L372.96 232.55 L373.82 231.34 L374.69 230.14 L375.55 228.95 L376.41 227.78 L377.28 226.65 L378.14 225.55 L379.00 224.48 L379.87 223.47 L380.73 222.51 L381.60 221.61 L382.46 220.77 L383.32 220.01 L384.19 219.32 L385.05 218.72 L385.91 218.21 L386.78 217.79 L387.64 217.48 L388.51 217.28 L389.37 217.19 L390.23 217.23 L391.10 217.39 L391.96 217.69 L392.82 218.14 L393.69 218.73 L394.55 219.47 L395.41 220.35 L396.28 221.35 L397.14 222.45 L398.01 223.64 L398.87 224.88 L399.73 226.18 L400.60 227.51 L401.46 228.84 L402.32 230.17 L403.19 231.48 L404.05 232.76 L404.91 234.02 L405.78 235.25 L406.64 236.45 L407.51 237.63 L408.37 238.78 L409.23 239.91 L410.10 241.00 L410.96 242.07 L411.82 243.12 L412.69 244.13 L413.55 245.12 L414.41 246.07 L415.28 247.00 L416.14 247.90 L417.01 248.77 L417.87 249.61 L418.73 250.42 L419.60 251.21 L420.46 251.96 L421.32 252.68 L422.19 253.36 L423.05 254.02 L423.91 254.65 L424.78 255.24 L425.64 255.81 L426.51 256.34 L427.37 256.85 L428.23 257.33 L429.10 257.79 L429.96 258.22 L430.82 258.63 L431.69 259.02 L432.55 259.39 L433.41 259.74 L434.28 260.07 L435.14 260.39 L436.01 260.70 L436.87 260.99 L437.73 261.27 L438.60 261.54 L439.46 261.80 L440.32 262.05 L441.19 262.30 L442.05 262.54 L442.92 262.78 L443.78 263.01 L444.64 263.24 L445.51 263.46 L446.37 263.68 L447.23 263.89 L448.10 264.10 L448.96 264.30 L449.82 264.49 L450.69 264.69 L451.55 264.87 L452.42 265.05 L453.28 265.23 L454.14 265.40 L455.01 265.57 L455.87 265.73 L456.73 265.88 L457.60 266.03 L458.46 266.18 L459.32 266.32 L460.19 266.45 L461.05 266.58 L461.92 266.70 L462.78 266.82 L463.64 266.93 L464.51 267.03 L465.37 267.13 L466.23 267.23 L467.10 267.32 L467.96 267.40 L468.82 267.48 L469.69 267.55 L470.55 267.61 L471.42 267.67 L472.28 267.73 L473.14 267.78 L474.01 267.82 L474.87 267.85 L475.73 267.88 L476.60 267.91 L477.46 267.93 L478.32 267.94 L479.19 267.95 L480.05 267.95 L480.92 267.94 L481.78 267.93 L482.64 267.91 L483.51 267.89 L484.37 267.86 L485.23 267.82 L486.10 267.78 L486.96 267.73 L487.83 267.67 L488.69 267.61 L489.55 267.54 L490.42 267.46 L491.28 267.38 L492.14 267.30 L493.01 267.20 L493.87 267.10 L494.73 266.99 L495.60 266.88 L496.46 266.76 L497.33 266.63 L498.19 266.50 L499.05 266.35 L499.92 266.21 L500.78 266.05 L501.64 265.89 L502.51 265.72 L503.37 265.55 L504.23 265.37 L505.10 265.18 L505.96 264.98 L506.83 264.78 L507.69 264.57 L508.55 264.35 L509.42 264.13 L510.28 263.90 L511.14 263.66 L512.01 263.42 L512.87 263.16 L513.73 262.91 L514.60 262.64 L515.46 262.37 L516.33 262.08 L517.19 261.80 L518.05 261.50 L518.92 261.20 L519.78 260.89 L520.64 260.57 L521.51 260.24 L522.37 259.90 L523.23 259.55 L524.10 259.18 L524.96 258.80 L525.83 258.40 L526.69 257.99 L527.55 257.56 L528.42 257.10 L529.28 256.63 L530.14 256.14 L531.01 255.62 L531.87 255.07 L532.73 254.51 L533.60 253.91 L534.46 253.29 L535.33 252.63 L536.19 251.95 L537.05 251.23 L537.92 250.48 L538.78 249.70 L539.64 248.88 L540.51 248.02 L541.37 247.13 L542.24 246.19 L543.10 245.22 L543.96 244.20 L544.83 243.14 L545.69 242.04 L546.55 240.89 L547.42 239.69 L548.28 238.45 L549.14 237.15 L550.01 235.81 L550.87 234.41 L551.74 232.96 L552.60 231.46 L553.46 229.90 L554.33 228.29 L555.19 226.62 L556.05 224.89 L556.92 223.10 L557.78 221.24 L558.64 219.33 L559.51 217.34 L560.37 215.29 L561.24 213.17 L562.10 210.97 L562.96 208.70 L563.83 206.34 L564.69 203.90 L565.55 201.36 L566.42 198.74 L567.28 196.03 L568.14 193.22 L569.01 190.30 L569.87 187.29 L570.74 184.16 L571.60 180.93 L572.46 177.59 L573.33 174.13 L574.19 170.55 L575.05 166.84 L575.92 163.02 L576.78 159.06 L577.64 154.97 L578.51 150.75 L579.37 146.39 L580.24 141.90 L581.10 137.30 L581.96 132.64 L582.83 127.96 L583.69 123.29 L584.55 118.67 L585.42 114.14 L586.28 109.75 L587.15 105.52 L588.01 101.50 L588.87 97.73 L589.74 94.25 L590.60 91.08 L591.46 88.28 L592.33 85.89 L593.19 83.93 L594.05 82.45 L594.92 81.49 L595.78 81.09 L596.65 81.28" stroke="#c01a3c" stroke-width="1.8"/>
<path d="M130.27 324.70 L131.14 324.94 L132.00 325.18 L132.86 325.41 L133.73 325.64 L134.59 325.86 L135.45 326.08 L136.32 326.29 L137.18 326.50 L138.05 326.70 L138.91 326.89 L139.77 327.09 L140.64 327.27 L141.50 327.45 L142.36 327.63 L143.23 327.80 L144.09 327.97 L144.96 328.13 L145.82 328.28 L146.68 328.43 L147.55 328.58 L148.41 328.72 L149.27 328.85 L150.14 328.98 L151.00 329.10 L151.86 329.22 L152.73 329.33 L153.59 329.43 L154.46 329.53 L155.32 329.63 L156.18 329.72 L157.05 329.80 L157.91 329.88 L158.77 329.95 L159.64 330.01 L160.50 330.07 L161.36 330.13 L162.23 330.18 L163.09 330.22 L163.96 330.25 L164.82 330.28 L165.68 330.31 L166.55 330.33 L167.41 330.34 L168.27 330.35 L169.14 330.35 L170.00 330.34 L170.86 330.33 L171.73 330.31 L172.59 330.29 L173.46 330.26 L174.32 330.22 L175.18 330.18 L176.05 330.13 L176.91 330.07 L177.77 330.01 L178.64 329.94 L179.50 329.86 L180.36 329.78 L181.23 329.70 L182.09 329.60 L182.96 329.50 L183.82 329.39 L184.68 329.28 L185.55 329.16 L186.41 329.03 L187.27 328.90 L188.14 328.75 L189.00 328.61 L189.87 328.45 L190.73 328.29 L191.59 328.12 L192.46 327.95 L193.32 327.77 L194.18 327.58 L195.05 327.38 L195.91 327.18 L196.77 326.97 L197.64 326.75 L198.50 326.53 L199.37 326.30 L200.23 326.06 L201.09 325.82 L201.96 325.56 L202.82 325.31 L203.68 325.04 L204.55 324.77 L205.41 324.48 L206.27 324.20 L207.14 323.90 L208.00 323.60 L208.87 323.29 L209.73 322.97 L210.59 322.64 L211.46 322.30 L212.32 321.95 L213.18 321.58 L214.05 321.20 L214.91 320.80 L215.77 320.39 L216.64 319.96 L217.50 319.50 L218.37 319.03 L219.23 318.54 L220.09 318.02 L220.96 317.47 L221.82 316.91 L222.68 316.31 L223.55 315.69 L224.41 315.03 L225.27 314.35 L226.14 313.63 L227.00 312.88 L227.87 312.10 L228.73 311.28 L229.59 310.42 L230.46 309.53 L231.32 308.59 L232.18 307.62 L233.05 306.60 L233.91 305.54 L234.77 304.44 L235.64 303.29 L236.50 302.09 L237.37 300.85 L238.23 299.55 L239.09 298.21 L239.96 296.81 L240.82 295.36 L241.68 293.86 L242.55 292.30 L243.41 290.69 L244.28 289.02 L245.14 287.29 L246.00 285.50 L246.87 283.64 L247.73 281.73 L248.59 279.74 L249.46 277.69 L250.32 275.57 L251.18 273.37 L252.05 271.10 L252.91 268.74 L253.78 266.30 L254.64 263.76 L255.50 261.14 L256.37 258.43 L257.23 255.62 L258.09 252.70 L258.96 249.69 L259.82 246.56 L260.68 243.33 L261.55 239.99 L262.41 236.53 L263.28 232.95 L264.14 229.24 L265.00 225.42 L265.87 221.46 L266.73 217.37 L267.59 213.15 L268.46 208.79 L269.32 204.30 L270.18 199.70 L271.05 195.04 L271.91 190.36 L272.78 185.69 L273.64 181.07 L274.50 176.54 L275.37 172.15 L276.23 167.92 L277.09 163.90 L277.96 160.13 L278.82 156.65 L279.68 153.48 L280.55 150.68 L281.41 148.29 L282.28 146.33 L283.14 144.85 L284.00 143.89 L284.87 143.49 L285.73 143.68 L285.73 126.84 L286.59 127.87 L287.46 129.36 L288.32 131.30 L289.19 133.65 L290.05 136.37 L290.91 139.45 L291.78 142.85 L292.64 146.55 L293.50 150.52 L294.37 154.72 L295.23 159.14 L296.09 163.73 L296.96 168.48 L297.82 173.35 L298.69 178.32 L299.55 183.36 L300.41 188.44 L301.28 193.52 L302.14 198.59 L303.00 203.62 L303.87 208.57 L304.73 213.44 L305.59 218.21 L306.46 222.89 L307.32 227.46 L308.19 231.91 L309.05 236.24 L309.91 240.43 L310.78 244.49 L311.64 248.39 L312.50 252.13 L313.37 255.71 L314.23 259.11 L315.09 262.33 L315.96 265.36 L316.82 268.19 L317.69 270.84 L318.55 273.32 L319.41 275.64 L320.28 277.82 L321.14 279.87 L322.00 281.82 L322.87 283.67 L323.73 285.44 L324.59 287.15 L325.46 288.80 L326.32 290.40 L327.19 291.95 L328.05 293.45 L328.91 294.90 L329.78 296.30 L330.64 297.64 L331.50 298.94 L332.37 300.18 L333.23 301.36 L334.09 302.50 L334.96 303.58 L335.82 304.60 L336.69 305.57 L337.55 306.49 L338.41 307.35 L339.28 308.16 L340.14 308.92 L341.00 309.61 L341.87 310.25 L342.73 310.84 L343.60 311.37 L344.46 311.84 L345.32 312.25 L346.19 312.61 L347.05 312.91 L347.91 313.15 L348.78 313.33 L349.64 313.45 L350.50 313.52 L351.37 313.52 L352.23 313.47 L353.10 313.36 L353.96 313.18 L354.82 312.95 L355.69 312.65 L356.55 312.30 L357.41 311.88 L358.28 311.40 L359.14 310.86 L360.00 310.25 L360.87 309.59 L361.73 308.86 L362.60 308.07 L363.46 307.21 L364.32 306.29 L365.19 305.32 L366.05 304.29 L366.91 303.21 L367.78 302.10 L368.64 300.96 L369.50 299.79 L370.37 298.59 L371.23 297.39 L372.10 296.17 L372.96 294.95 L373.82 293.74 L374.69 292.54 L375.55 291.35 L376.41 290.18 L377.28 289.05 L378.14 287.95 L379.00 286.88 L379.87 285.87 L380.73 284.91 L381.60 284.01 L382.46 283.17 L383.32 282.41 L384.19 281.72 L385.05 281.12 L385.91 280.61 L386.78 280.19 L387.64 279.88 L388.51 279.68 L389.37 279.59 L390.23 279.63 L391.10 279.79 L391.96 280.09 L392.82 280.54 L393.69 281.13 L394.55 281.87 L395.41 282.75 L396.28 283.75 L397.14 284.85 L398.01 286.04 L398.87 287.28 L399.73 288.58 L400.60 289.91 L401.46 291.24 L402.32 292.57 L403.19 293.88 L404.05 295.16 L404.91 296.42 L405.78 297.65 L406.64 298.85 L407.51 300.03 L408.37 301.18 L409.23 302.31 L410.10 303.40 L410.96 304.47 L411.82 305.52 L412.69 306.53 L413.55 307.52 L414.41 308.47 L415.28 309.40 L416.14 310.30 L417.01 311.17 L417.87 312.01 L418.73 312.82 L419.60 313.61 L420.46 314.36 L421.32 315.08 L422.19 315.76 L423.05 316.42 L423.91 317.05 L424.78 317.64 L425.64 318.21 L426.51 318.74 L427.37 319.25 L428.23 319.73 L429.10 320.19 L429.96 320.62 L430.82 321.03 L431.69 321.42 L432.55 321.79 L433.41 322.14 L434.28 322.47 L435.14 322.79 L436.01 323.10 L436.87 323.39 L437.73 323.67 L438.60 323.94 L439.46 324.20 L440.32 324.45 L441.19 324.70 L442.05 324.94 L442.92 325.18 L443.78 325.41 L444.64 325.64 L445.51 325.86 L446.37 326.08 L447.23 326.29 L448.10 326.50 L448.96 326.70 L449.82 326.89 L450.69 327.09 L451.55 327.27 L452.42 327.45 L453.28 327.63 L454.14 327.80 L455.01 327.97 L455.87 328.13 L456.73 328.28 L457.60 328.43 L458.46 328.58 L459.32 328.72 L460.19 328.85 L461.05 328.98 L461.92 329.10 L462.78 329.22 L463.64 329.33 L464.51 329.43 L465.37 329.53 L466.23 329.63 L467.10 329.72 L467.96 329.80 L468.82 329.88 L469.69 329.95 L470.55 330.01 L471.42 330.07 L472.28 330.13 L473.14 330.18 L474.01 330.22 L474.87 330.25 L475.73 330.28 L476.60 330.31 L477.46 330.33 L478.32 330.34 L479.19 330.35 L480.05 330.35 L480.92 330.34 L481.78 330.33 L482.64 330.31 L483.51 330.29 L484.37 330.26 L485.23 330.22 L486.10 330.18 L486.96 330.13 L487.83 330.07 L488.69 330.01 L489.55 329.94 L490.42 329.86 L491.28 329.78 L492.14 329.70 L493.01 329.60 L493.87 329.50 L494.73 329.39 L495.60 329.28 L496.46 329.16 L497.33 329.03 L498.19 328.90 L499.05 328.75 L499.92 328.61 L500.78 328.45 L501.64 328.29 L502.51 328.12 L503.37 327.95 L504.23 327.77 L505.10 327.58 L505.96 327.38 L506.83 327.18 L507.69 326.97 L508.55 326.75 L509.42 326.53 L510.28 326.30 L511.14 326.06 L512.01 325.82 L512.87 325.56 L513.73 325.31 L514.60 325.04 L515.46 324.77 L516.33 324.48 L517.19 324.20 L518.05 323.90 L518.92 323.60 L519.78 323.29 L520.64 322.97 L521.51 322.64 L522.37 322.30 L523.23 321.95 L524.10 321.58 L524.96 321.20 L525.83 320.80 L526.69 320.39 L527.55 319.96 L528.42 319.50 L529.28 319.03 L530.14 318.54 L531.01 318.02 L531.87 317.47 L532.73 316.91 L533.60 316.31 L534.46 315.69 L535.33 315.03 L536.19 314.35 L537.05 313.63 L537.92 312.88 L538.78 312.10 L539.64 311.28 L540.51 310.42 L541.37 309.53 L542.24 308.59 L543.10 307.62 L543.96 306.60 L544.83 305.54 L545.69 304.44 L546.55 303.29 L547.42 302.09 L548.28 300.85 L549.14 299.55 L550.01 298.21 L550.87 296.81 L551.74 295.36 L552.60 293.86 L553.46 292.30 L554.33 290.69 L555.19 289.02 L556.05 287.29 L556.92 285.50 L557.78 283.64 L558.64 281.73 L559.51 279.74 L560.37 277.69 L561.24 275.57 L562.10 273.37 L562.96 271.10 L563.83 268.74 L564.69 266.30 L565.55 263.76 L566.42 261.14 L567.28 258.43 L568.14 255.62 L569.01 252.70 L569.87 249.69 L570.74 246.56 L571.60 243.33 L572.46 239.99 L573.33 236.53 L574.19 232.95 L575.05 229.24 L575.92 225.42 L576.78 221.46 L577.64 217.37 L578.51 213.15 L579.37 208.79 L580.24 204.30 L581.10 199.70 L581.96 195.04 L582.83 190.36 L583.69 185.69 L584.55 181.07 L585.42 176.54 L586.28 172.15 L587.15 167.92 L588.01 163.90 L588.87 160.13 L589.74 156.65 L590.60 153.48 L591.46 150.68 L592.33 148.29 L593.19 146.33 L594.05 144.85 L594.92 143.89 L595.78 143.49 L596.65 143.68" stroke="#cc2226" stroke-width="1.8"/>
</g>
<line x1="110" y1="337.00" x2="112.8" y2="337.00" stroke="#333" stroke-width="0.7"/>
<line x1="110" y1="329.20" x2="112.8" y2="329.20" stroke="#333" stroke-width="0.7"/>
<line x1="110" y1="321.40" x2="112.8" y2="321.40" stroke="#333" stroke-width="0.7"/>
<line x1="110" y1="313.60" x2="112.8" y2="313.60" stroke="#333" stroke-width="0.7"/>
<line x1="110" y1="305.80" x2="112.8" y2="305.80" stroke="#333" stroke-width="0.7"/>
<line x1="110" y1="298.00" x2="112.8" y2="298.00" stroke="#333" stroke-width="0.7"/>
<line x1="110" y1="290.20" x2="112.8" y2="290.20" stroke="#333" stroke-width="0.7"/>
<line x1="110" y1="282.40" x2="112.8" y2="282.40" stroke="#333" stroke-width="0.7"/>
<line x1="110" y1="274.60" x2="112.8" y2="274.60" stroke="#333" stroke-width="0.7"/>
<line x1="110" y1="266.80" x2="112.8" y2="266.80" stroke="#333" stroke-width="0.7"/>
<line x1="110" y1="259.00" x2="112.8" y2="259.00" stroke="#333" stroke-width="0.7"/>
<line x1="110" y1="251.20" x2="112.8" y2="251.20" stroke="#333" stroke-width="0.7"/>
<line x1="110" y1="243.40" x2="112.8" y2="243.40" stroke="#333" stroke-width="0.7"/>
<line x1="110" y1="235.60" x2="112.8" y2="235.60" stroke="#333" stroke-width="0.7"/>
<line x1="110" y1="227.80" x2="112.8" y2="227.80" stroke="#333" stroke-width="0.7"/>
<line x1="110" y1="220.00" x2="112.8" y2="220.00" stroke="#333" stroke-width="0.7"/>
<line x1="110" y1="212.20" x2="112.8" y2="212.20" stroke="#333" stroke-width="0.7"/>
<line x1="110" y1="204.40" x2="112.8" y2="204.40" stroke="#333" stroke-width="0.7"/>
<line x1="110" y1="196.60" x2="112.8" y2="196.60" stroke="#333" stroke-width="0.7"/>
<line x1="110" y1="188.80" x2="112.8" y2="188.80" stroke="#333" stroke-width="0.7"/>
<line x1="110" y1="181.00" x2="112.8" y2="181.00" stroke="#333" stroke-width="0.7"/>
<line x1="110" y1="173.20" x2="112.8" y2="173.20" stroke="#333" stroke-width="0.7"/>
<line x1="110" y1="165.40" x2="112.8" y2="165.40" stroke="#333" stroke-width="0.7"/>
<line x1="110" y1="157.60" x2="112.8" y2="157.60" stroke="#333" stroke-width="0.7"/>
<line x1="110" y1="149.80" x2="112.8" y2="149.80" stroke="#333" stroke-width="0.7"/>
<line x1="110" y1="142.00" x2="112.8" y2="142.00" stroke="#333" stroke-width="0.7"/>
<line x1="110" y1="134.20" x2="112.8" y2="134.20" stroke="#333" stroke-width="0.7"/>
<line x1="110" y1="126.40" x2="112.8" y2="126.40" stroke="#333" stroke-width="0.7"/>
<line x1="110" y1="118.60" x2="112.8" y2="118.60" stroke="#333" stroke-width="0.7"/>
<line x1="110" y1="110.80" x2="112.8" y2="110.80" stroke="#333" stroke-width="0.7"/>
<line x1="110" y1="103.00" x2="112.8" y2="103.00" stroke="#333" stroke-width="0.7"/>
<line x1="110" y1="95.20" x2="112.8" y2="95.20" stroke="#333" stroke-width="0.7"/>
<line x1="110" y1="87.40" x2="112.8" y2="87.40" stroke="#333" stroke-width="0.7"/>
<line x1="110" y1="79.60" x2="112.8" y2="79.60" stroke="#333" stroke-width="0.7"/>
<line x1="110" y1="71.80" x2="112.8" y2="71.80" stroke="#333" stroke-width="0.7"/>
<line x1="110" y1="64.00" x2="112.8" y2="64.00" stroke="#333" stroke-width="0.7"/>
<line x1="113.00" y1="337.0" x2="113.00" y2="339.5" stroke="#333" stroke-width="0.7"/>
<line x1="134.59" y1="337.0" x2="134.59" y2="339.5" stroke="#333" stroke-width="0.7"/>
<line x1="156.18" y1="337.0" x2="156.18" y2="339.5" stroke="#333" stroke-width="0.7"/>
<line x1="177.77" y1="337.0" x2="177.77" y2="339.5" stroke="#333" stroke-width="0.7"/>
<line x1="199.37" y1="337.0" x2="199.37" y2="339.5" stroke="#333" stroke-width="0.7"/>
<line x1="220.96" y1="337.0" x2="220.96" y2="339.5" stroke="#333" stroke-width="0.7"/>
<line x1="242.55" y1="337.0" x2="242.55" y2="339.5" stroke="#333" stroke-width="0.7"/>
<line x1="264.14" y1="337.0" x2="264.14" y2="339.5" stroke="#333" stroke-width="0.7"/>
<line x1="285.73" y1="337.0" x2="285.73" y2="339.5" stroke="#333" stroke-width="0.7"/>
<line x1="307.32" y1="337.0" x2="307.32" y2="339.5" stroke="#333" stroke-width="0.7"/>
<line x1="328.91" y1="337.0" x2="328.91" y2="339.5" stroke="#333" stroke-width="0.7"/>
<line x1="350.50" y1="337.0" x2="350.50" y2="339.5" stroke="#333" stroke-width="0.7"/>
<line x1="372.10" y1="337.0" x2="372.10" y2="339.5" stroke="#333" stroke-width="0.7"/>
<line x1="393.69" y1="337.0" x2="393.69" y2="339.5" stroke="#333" stroke-width="0.7"/>
<line x1="415.28" y1="337.0" x2="415.28" y2="339.5" stroke="#333" stroke-width="0.7"/>
<line x1="436.87" y1="337.0" x2="436.87" y2="339.5" stroke="#333" stroke-width="0.7"/>
<line x1="458.46" y1="337.0" x2="458.46" y2="339.5" stroke="#333" stroke-width="0.7"/>
<line x1="480.05" y1="337.0" x2="480.05" y2="339.5" stroke="#333" stroke-width="0.7"/>
<line x1="501.64" y1="337.0" x2="501.64" y2="339.5" stroke="#333" stroke-width="0.7"/>
<line x1="523.23" y1="337.0" x2="523.23" y2="339.5" stroke="#333" stroke-width="0.7"/>
<line x1="544.83" y1="337.0" x2="544.83" y2="339.5" stroke="#333" stroke-width="0.7"/>
<line x1="566.42" y1="337.0" x2="566.42" y2="339.5" stroke="#333" stroke-width="0.7"/>
<line x1="588.01" y1="337.0" x2="588.01" y2="339.5" stroke="#333" stroke-width="0.7"/>
<line x1="609.60" y1="337.0" x2="609.60" y2="339.5" stroke="#333" stroke-width="0.7"/>
</svg>
<div style="left:102.00px;top:347.90px;width:480.00px;height:6.60px;background:#c2c2c2;border-top:0.7px solid #d8d8d8"></div>
<div style="left:101.90px;top:347.90px;width:6.80px;height:6.60px;background:linear-gradient(#dedede,#c8c8c8);border-top:0.7px solid #eeeeee;border-left:0.7px solid #e8e8e8;border-right:0.8px solid #7c7c7c;border-bottom:0.8px solid #7c7c7c"></div>
<svg style="left:102.5px;top:348.7px" width="5" height="5"><path d="M3.6 1.2L1.6 2.6L3.6 4z" fill="#444"/></svg>
<div style="left:582.70px;top:347.90px;width:5.60px;height:6.80px;background:linear-gradient(#e0e0e0,#c8c8c8);border-top:0.6px solid #eee;border-left:0.6px solid #eee;border-right:0.7px solid #888;border-bottom:0.7px solid #888"></div>
<svg style="left:582.7px;top:347.9px" width="5.6" height="6.8"><path d="M2 2L4 3.4L2 4.8z" fill="#555"/></svg>
<div style="left:588.30px;top:347.90px;width:7.70px;height:6.80px;background:linear-gradient(#e0e0e0,#c8c8c8);border-top:0.6px solid #eee;border-left:0.6px solid #eee;border-right:0.7px solid #888;border-bottom:0.7px solid #888"></div>
<svg style="left:588.3px;top:347.9px" width="7.7" height="6.8"><path d="M3.9 0.8v5.2M1 3.4h5.8" stroke="#000" stroke-width="1.1"/></svg>
<div style="left:596.50px;top:347.90px;width:8.10px;height:6.80px;background:#4a5058;border:0.7px solid #222"></div>
<svg style="left:596.5px;top:347.9px" width="8.1" height="6.8"><path d="M1.8 1.5h4.6v3.8h-4.6z" fill="none" stroke="#dde" stroke-width="0.7"/><path d="M1.6 1.4l1.8 1.8" stroke="#6d6" stroke-width="0.9"/></svg>
<div style="left:605.00px;top:347.90px;width:8.60px;height:6.80px;background:linear-gradient(#e0e0e0,#c8c8c8);border-top:0.6px solid #eee;border-left:0.6px solid #eee;border-right:0.7px solid #888;border-bottom:0.7px solid #888"></div>
<svg style="left:605px;top:347.9px" width="8.6" height="6.8"><path d="M2.2 6V3.4M3.4 6V1.8M4.6 6V1.6M5.8 6V2.2M6.8 6V3.6" stroke="#333" stroke-width="0.8"/><path d="M2 5.8h5" stroke="#333" stroke-width="0.9"/></svg>
<div style="left:639.30px;top:45.20px;width:52.40px;height:10.50px;background:linear-gradient(#e2e2e2,#cacaca);border:1px solid #707070;border-radius:1px;box-shadow:inset 1px 1px 0 #f0f0f0,inset -1px -1px 0 #a0a0a0"></div>
<div style="left:679.50px;top:64.90px;width:8.60px;height:6.90px;background:#000;border:0.6px solid #5a5a5a"></div>
<svg style="left:679.5px;top:64.90px" width="8.6" height="6.9"><path d="M1 5.5L7.6 1.5" fill="none" stroke="#30d830" stroke-width="1.4"/></svg>
<div style="left:679.50px;top:73.62px;width:8.60px;height:6.90px;background:#000;border:0.6px solid #5a5a5a"></div>
<svg style="left:679.5px;top:73.62px" width="8.6" height="6.9"><path d="M1 5.5L7.6 1.5" fill="none" stroke="#d02038" stroke-width="1.4"/></svg>
<div style="left:679.50px;top:82.34px;width:8.60px;height:6.90px;background:#000;border:0.6px solid #5a5a5a"></div>
<svg style="left:679.5px;top:82.34px" width="8.6" height="6.9"><path d="M1 5.5L7.6 1.5" fill="none" stroke="#e82020" stroke-width="1.4"/></svg>
<div style="left:679.50px;top:91.06px;width:8.60px;height:6.90px;background:#000;border:0.6px solid #5a5a5a"></div>
<svg style="left:679.5px;top:91.06px" width="8.6" height="6.9"><path d="M1 5.5Q4.3 -0.5 7.6 5.5" fill="none" stroke="#801820" stroke-width="0.7"/></svg>
<div style="left:679.50px;top:99.78px;width:8.60px;height:6.90px;background:#000;border:0.6px solid #5a5a5a"></div>
<svg style="left:679.5px;top:99.78px" width="8.6" height="6.9"><path d="M1 5.5L4.3 2L7.6 5.5" fill="none" stroke="#909030" stroke-width="0.7"/></svg>
<div style="left:679.50px;top:108.50px;width:8.60px;height:6.90px;background:#000;border:0.6px solid #5a5a5a"></div>
<svg style="left:679.5px;top:108.50px" width="8.6" height="6.9"><path d="M1 5.5L4.3 2L7.6 5.5" fill="none" stroke="#6040a0" stroke-width="0.7"/></svg>
<div style="left:679.50px;top:117.22px;width:8.60px;height:6.90px;background:#000;border:0.6px solid #5a5a5a"></div>
<div style="left:679.50px;top:125.94px;width:8.60px;height:6.90px;background:#000;border:0.6px solid #5a5a5a"></div>
<div style="left:679.50px;top:134.66px;width:8.60px;height:6.90px;background:#000;border:0.6px solid #5a5a5a"></div>
<div style="left:679.50px;top:143.38px;width:8.60px;height:6.90px;background:#000;border:0.6px solid #5a5a5a"></div>
<div style="left:679.50px;top:152.10px;width:8.60px;height:6.90px;background:#000;border:0.6px solid #5a5a5a"></div>
<div style="left:679.50px;top:160.82px;width:8.60px;height:6.90px;background:#000;border:0.6px solid #5a5a5a"></div>
<div style="left:679.50px;top:169.54px;width:8.60px;height:6.90px;background:#000;border:0.6px solid #5a5a5a"></div>
<div style="left:679.50px;top:178.26px;width:8.60px;height:6.90px;background:#000;border:0.6px solid #5a5a5a"></div>
<div style="left:679.50px;top:186.98px;width:8.60px;height:6.90px;background:#000;border:0.6px solid #5a5a5a"></div>
<div style="left:679.50px;top:195.70px;width:8.60px;height:6.90px;background:#000;border:0.6px solid #5a5a5a"></div>
<div style="left:679.50px;top:204.42px;width:8.60px;height:6.90px;background:#000;border:0.6px solid #5a5a5a"></div>
<div style="left:679.50px;top:213.14px;width:8.60px;height:6.90px;background:#000;border:0.6px solid #5a5a5a"></div>
<div style="left:679.50px;top:221.86px;width:8.60px;height:6.90px;background:#000;border:0.6px solid #5a5a5a"></div>
<div style="left:619.90px;top:289.30px;width:41.70px;height:7.70px;background:#fff;border:1px solid #8c8c8c;border-right-color:#e0e0e0;border-bottom-color:#e0e0e0"></div>
<div style="left:663.00px;top:288.80px;width:8.00px;height:8.60px;background:linear-gradient(#d8d8d8,#c2c2c2);border-top:0.7px solid #ececec;border-left:0.7px solid #e4e4e4;border-right:0.8px solid #8c8c8c;border-bottom:0.8px solid #8c8c8c"></div>
<div style="left:671.50px;top:288.80px;width:9.00px;height:8.60px;background:linear-gradient(#d8d8d8,#c2c2c2);border-top:0.7px solid #ececec;border-left:0.7px solid #e4e4e4;border-right:0.8px solid #8c8c8c;border-bottom:0.8px solid #8c8c8c"></div>
<div style="left:681.00px;top:288.80px;width:9.00px;height:8.60px;background:linear-gradient(#d8d8d8,#c2c2c2);border-top:0.7px solid #ececec;border-left:0.7px solid #e4e4e4;border-right:0.8px solid #8c8c8c;border-bottom:0.8px solid #8c8c8c"></div>
<svg style="left:663px;top:289.30px" width="27" height="8"><ellipse cx="3.8" cy="5" rx="1.7" ry="1.5" fill="#3a3a3a"/><path d="M2.7 4v-1.2a1.1 1.1 0 0 1 2.2 0v1.2" fill="none" stroke="#3a3a3a" stroke-width="0.7"/><path d="M10.6 2v5M11.8 2.6h1.6a1.3 1.8 0 0 1 0 3.6h-1.6zM15.6 2.4v1" stroke="#111" stroke-width="0.7" fill="none"/><circle cx="9.7" cy="1.4" r="0.9" fill="#60e060"/><path d="M19.2 2.5v2.5M21.2 2.6h2.8M21.6 4h2.2" stroke="#333" stroke-width="0.6" fill="none"/><path d="M22.2 5.3h2.2l-1.1 1.3z" fill="#111"/></svg>
<div style="left:619.90px;top:300.70px;width:41.70px;height:7.70px;background:#fff;border:1px solid #8c8c8c;border-right-color:#e0e0e0;border-bottom-color:#e0e0e0"></div>
<div style="left:663.00px;top:300.20px;width:8.00px;height:8.60px;background:linear-gradient(#d8d8d8,#c2c2c2);border-top:0.7px solid #ececec;border-left:0.7px solid #e4e4e4;border-right:0.8px solid #8c8c8c;border-bottom:0.8px solid #8c8c8c"></div>
<div style="left:671.50px;top:300.20px;width:9.00px;height:8.60px;background:linear-gradient(#d8d8d8,#c2c2c2);border-top:0.7px solid #ececec;border-left:0.7px solid #e4e4e4;border-right:0.8px solid #8c8c8c;border-bottom:0.8px solid #8c8c8c"></div>
<div style="left:681.00px;top:300.20px;width:9.00px;height:8.60px;background:linear-gradient(#d8d8d8,#c2c2c2);border-top:0.7px solid #ececec;border-left:0.7px solid #e4e4e4;border-right:0.8px solid #8c8c8c;border-bottom:0.8px solid #8c8c8c"></div>
<svg style="left:663px;top:300.70px" width="27" height="8"><ellipse cx="3.8" cy="5" rx="1.7" ry="1.5" fill="#3a3a3a"/><path d="M2.7 4v-1.2a1.1 1.1 0 0 1 2.2 0v1.2" fill="none" stroke="#3a3a3a" stroke-width="0.7"/><path d="M10.6 2v5M11.8 2.6h1.6a1.3 1.8 0 0 1 0 3.6h-1.6zM15.6 2.4v1" stroke="#111" stroke-width="0.7" fill="none"/><circle cx="9.7" cy="1.4" r="0.9" fill="#60e060"/><path d="M19.2 2.5v2.5M21.2 2.6h2.8M21.6 4h2.2" stroke="#333" stroke-width="0.6" fill="none"/><path d="M22.2 5.3h2.2l-1.1 1.3z" fill="#111"/></svg>
<div style="left:619.90px;top:311.80px;width:41.70px;height:7.70px;background:#fff;border:1px solid #8c8c8c;border-right-color:#e0e0e0;border-bottom-color:#e0e0e0"></div>
<div style="left:663.00px;top:311.30px;width:8.00px;height:8.60px;background:linear-gradient(#d8d8d8,#c2c2c2);border-top:0.7px solid #ececec;border-left:0.7px solid #e4e4e4;border-right:0.8px solid #8c8c8c;border-bottom:0.8px solid #8c8c8c"></div>
<div style="left:671.50px;top:311.30px;width:9.00px;height:8.60px;background:linear-gradient(#d8d8d8,#c2c2c2);border-top:0.7px solid #ececec;border-left:0.7px solid #e4e4e4;border-right:0.8px solid #8c8c8c;border-bottom:0.8px solid #8c8c8c"></div>
<div style="left:681.00px;top:311.30px;width:9.00px;height:8.60px;background:linear-gradient(#d8d8d8,#c2c2c2);border-top:0.7px solid #ececec;border-left:0.7px solid #e4e4e4;border-right:0.8px solid #8c8c8c;border-bottom:0.8px solid #8c8c8c"></div>
<svg style="left:663px;top:311.80px" width="27" height="8"><ellipse cx="3.8" cy="5" rx="1.7" ry="1.5" fill="#3a3a3a"/><path d="M2.7 4v-1.2a1.1 1.1 0 0 1 2.2 0v1.2" fill="none" stroke="#3a3a3a" stroke-width="0.7"/><path d="M10.6 2v5M11.8 2.6h1.6a1.3 1.8 0 0 1 0 3.6h-1.6zM15.6 2.4v1" stroke="#111" stroke-width="0.7" fill="none"/><circle cx="9.7" cy="1.4" r="0.9" fill="#60e060"/><path d="M19.2 2.5v2.5M21.2 2.6h2.8M21.6 4h2.2" stroke="#333" stroke-width="0.6" fill="none"/><path d="M22.2 5.3h2.2l-1.1 1.3z" fill="#111"/></svg>
<div style="left:619.90px;top:323.10px;width:41.70px;height:7.70px;background:#fff;border:1px solid #8c8c8c;border-right-color:#e0e0e0;border-bottom-color:#e0e0e0"></div>
<div style="left:663.00px;top:322.60px;width:8.00px;height:8.60px;background:linear-gradient(#d8d8d8,#c2c2c2);border-top:0.7px solid #ececec;border-left:0.7px solid #e4e4e4;border-right:0.8px solid #8c8c8c;border-bottom:0.8px solid #8c8c8c"></div>
<div style="left:671.50px;top:322.60px;width:9.00px;height:8.60px;background:linear-gradient(#d8d8d8,#c2c2c2);border-top:0.7px solid #ececec;border-left:0.7px solid #e4e4e4;border-right:0.8px solid #8c8c8c;border-bottom:0.8px solid #8c8c8c"></div>
<div style="left:681.00px;top:322.60px;width:9.00px;height:8.60px;background:linear-gradient(#d8d8d8,#c2c2c2);border-top:0.7px solid #ececec;border-left:0.7px solid #e4e4e4;border-right:0.8px solid #8c8c8c;border-bottom:0.8px solid #8c8c8c"></div>
<svg style="left:663px;top:323.10px" width="27" height="8"><ellipse cx="3.8" cy="5" rx="1.7" ry="1.5" fill="#3a3a3a"/><path d="M2.7 4v-1.2a1.1 1.1 0 0 1 2.2 0v1.2" fill="none" stroke="#3a3a3a" stroke-width="0.7"/><path d="M10.6 2v5M11.8 2.6h1.6a1.3 1.8 0 0 1 0 3.6h-1.6zM15.6 2.4v1" stroke="#111" stroke-width="0.7" fill="none"/><circle cx="9.7" cy="1.4" r="0.9" fill="#60e060"/><path d="M19.2 2.5v2.5M21.2 2.6h2.8M21.6 4h2.2" stroke="#333" stroke-width="0.6" fill="none"/><path d="M22.2 5.3h2.2l-1.1 1.3z" fill="#111"/></svg>
<div style="left:619.90px;top:334.20px;width:41.70px;height:7.70px;background:#fff;border:1px solid #8c8c8c;border-right-color:#e0e0e0;border-bottom-color:#e0e0e0"></div>
<div style="left:663.00px;top:333.70px;width:8.00px;height:8.60px;background:linear-gradient(#d8d8d8,#c2c2c2);border-top:0.7px solid #ececec;border-left:0.7px solid #e4e4e4;border-right:0.8px solid #8c8c8c;border-bottom:0.8px solid #8c8c8c"></div>
<div style="left:671.50px;top:333.70px;width:9.00px;height:8.60px;background:linear-gradient(#d8d8d8,#c2c2c2);border-top:0.7px solid #ececec;border-left:0.7px solid #e4e4e4;border-right:0.8px solid #8c8c8c;border-bottom:0.8px solid #8c8c8c"></div>
<div style="left:681.00px;top:333.70px;width:9.00px;height:8.60px;background:linear-gradient(#d8d8d8,#c2c2c2);border-top:0.7px solid #ececec;border-left:0.7px solid #e4e4e4;border-right:0.8px solid #8c8c8c;border-bottom:0.8px solid #8c8c8c"></div>
<svg style="left:663px;top:334.20px" width="27" height="8"><ellipse cx="3.8" cy="5" rx="1.7" ry="1.5" fill="#3a3a3a"/><path d="M2.7 4v-1.2a1.1 1.1 0 0 1 2.2 0v1.2" fill="none" stroke="#3a3a3a" stroke-width="0.7"/><path d="M10.6 2v5M11.8 2.6h1.6a1.3 1.8 0 0 1 0 3.6h-1.6zM15.6 2.4v1" stroke="#111" stroke-width="0.7" fill="none"/><circle cx="9.7" cy="1.4" r="0.9" fill="#60e060"/><path d="M19.2 2.5v2.5M21.2 2.6h2.8M21.6 4h2.2" stroke="#333" stroke-width="0.6" fill="none"/><path d="M22.2 5.3h2.2l-1.1 1.3z" fill="#111"/></svg>
<div style="left:619.90px;top:345.60px;width:41.70px;height:7.70px;background:#fff;border:1px solid #8c8c8c;border-right-color:#e0e0e0;border-bottom-color:#e0e0e0"></div>
<div style="left:663.00px;top:345.10px;width:8.00px;height:8.60px;background:linear-gradient(#d8d8d8,#c2c2c2);border-top:0.7px solid #ececec;border-left:0.7px solid #e4e4e4;border-right:0.8px solid #8c8c8c;border-bottom:0.8px solid #8c8c8c"></div>
<div style="left:671.50px;top:345.10px;width:9.00px;height:8.60px;background:linear-gradient(#d8d8d8,#c2c2c2);border-top:0.7px solid #ececec;border-left:0.7px solid #e4e4e4;border-right:0.8px solid #8c8c8c;border-bottom:0.8px solid #8c8c8c"></div>
<div style="left:681.00px;top:345.10px;width:9.00px;height:8.60px;background:linear-gradient(#d8d8d8,#c2c2c2);border-top:0.7px solid #ececec;border-left:0.7px solid #e4e4e4;border-right:0.8px solid #8c8c8c;border-bottom:0.8px solid #8c8c8c"></div>
<svg style="left:663px;top:345.60px" width="27" height="8"><ellipse cx="3.8" cy="5" rx="1.7" ry="1.5" fill="#3a3a3a"/><path d="M2.7 4v-1.2a1.1 1.1 0 0 1 2.2 0v1.2" fill="none" stroke="#3a3a3a" stroke-width="0.7"/><path d="M10.6 2v5M11.8 2.6h1.6a1.3 1.8 0 0 1 0 3.6h-1.6zM15.6 2.4v1" stroke="#111" stroke-width="0.7" fill="none"/><circle cx="9.7" cy="1.4" r="0.9" fill="#60e060"/><path d="M19.2 2.5v2.5M21.2 2.6h2.8M21.6 4h2.2" stroke="#333" stroke-width="0.6" fill="none"/><path d="M22.2 5.3h2.2l-1.1 1.3z" fill="#111"/></svg>
<div style="left:77.30px;top:362.90px;width:605.90px;height:75.60px;background:#fff;border:1px solid #7c7c7c;border-right:none"></div>
<div style="left:78.30px;top:363.90px;width:604.90px;height:8.00px;background:linear-gradient(#e4e4e4,#d0d0d0 50%,#bcbcbc)"></div>
<div style="left:683.20px;top:362.90px;width:7.30px;height:68.30px;background:#c6c6c6;border-left:1px solid #a0a0a0;border-top:1px solid #8a8a8a;border-right:1px solid #a8a8a8"></div>
<div style="left:78.30px;top:371.20px;width:604.90px;height:0.80px;background:#cfcfcf"></div>
<div style="left:78.30px;top:378.62px;width:604.90px;height:0.80px;background:#cfcfcf"></div>
<div style="left:78.30px;top:386.04px;width:604.90px;height:0.80px;background:#cfcfcf"></div>
<div style="left:78.30px;top:393.46px;width:604.90px;height:0.80px;background:#cfcfcf"></div>
<div style="left:78.30px;top:400.88px;width:604.90px;height:0.80px;background:#cfcfcf"></div>
<div style="left:78.30px;top:408.30px;width:604.90px;height:0.80px;background:#cfcfcf"></div>
<div style="left:78.30px;top:415.72px;width:604.90px;height:0.80px;background:#cfcfcf"></div>
<div style="left:78.30px;top:423.14px;width:604.90px;height:0.80px;background:#cfcfcf"></div>
<div style="left:78.30px;top:430.56px;width:604.90px;height:0.80px;background:#cfcfcf"></div>
<div style="left:78.30px;top:370.60px;width:604.90px;height:0.90px;background:#8a8a8a"></div>
<div style="left:116.20px;top:363.90px;width:1.00px;height:67.30px;background:#b0b0b0"></div>
<div style="left:116.10px;top:363.90px;width:1.20px;height:8.00px;background:#8c8c8c"></div>
<div style="left:117.40px;top:363.90px;width:0.80px;height:8.00px;background:#ececec"></div>
<div style="left:146.50px;top:363.90px;width:1.00px;height:67.30px;background:#b0b0b0"></div>
<div style="left:146.40px;top:363.90px;width:1.20px;height:8.00px;background:#8c8c8c"></div>
<div style="left:147.70px;top:363.90px;width:0.80px;height:8.00px;background:#ececec"></div>
<div style="left:270.00px;top:363.90px;width:1.00px;height:67.30px;background:#b0b0b0"></div>
<div style="left:269.90px;top:363.90px;width:1.20px;height:8.00px;background:#8c8c8c"></div>
<div style="left:271.20px;top:363.90px;width:0.80px;height:8.00px;background:#ececec"></div>
<div style="left:302.10px;top:363.90px;width:1.00px;height:67.30px;background:#b0b0b0"></div>
<div style="left:302.00px;top:363.90px;width:1.20px;height:8.00px;background:#8c8c8c"></div>
<div style="left:303.30px;top:363.90px;width:0.80px;height:8.00px;background:#ececec"></div>
<div style="left:328.20px;top:363.90px;width:1.00px;height:67.30px;background:#b0b0b0"></div>
<div style="left:328.10px;top:363.90px;width:1.20px;height:8.00px;background:#8c8c8c"></div>
<div style="left:329.40px;top:363.90px;width:0.80px;height:8.00px;background:#ececec"></div>
<div style="left:347.10px;top:363.90px;width:1.00px;height:67.30px;background:#b0b0b0"></div>
<div style="left:347.00px;top:363.90px;width:1.20px;height:8.00px;background:#8c8c8c"></div>
<div style="left:348.30px;top:363.90px;width:0.80px;height:8.00px;background:#ececec"></div>
<div style="left:369.80px;top:363.90px;width:1.00px;height:67.30px;background:#b0b0b0"></div>
<div style="left:369.70px;top:363.90px;width:1.20px;height:8.00px;background:#8c8c8c"></div>
<div style="left:371.00px;top:363.90px;width:0.80px;height:8.00px;background:#ececec"></div>
<div style="left:394.80px;top:363.90px;width:1.00px;height:67.30px;background:#b0b0b0"></div>
<div style="left:394.70px;top:363.90px;width:1.20px;height:8.00px;background:#8c8c8c"></div>
<div style="left:396.00px;top:363.90px;width:0.80px;height:8.00px;background:#ececec"></div>
<div style="left:426.40px;top:363.90px;width:1.00px;height:67.30px;background:#b0b0b0"></div>
<div style="left:426.30px;top:363.90px;width:1.20px;height:8.00px;background:#8c8c8c"></div>
<div style="left:427.60px;top:363.90px;width:0.80px;height:8.00px;background:#ececec"></div>
<div style="left:454.40px;top:363.90px;width:1.00px;height:67.30px;background:#b0b0b0"></div>
<div style="left:454.30px;top:363.90px;width:1.20px;height:8.00px;background:#8c8c8c"></div>
<div style="left:455.60px;top:363.90px;width:0.80px;height:8.00px;background:#ececec"></div>
<div style="left:478.30px;top:363.90px;width:1.00px;height:67.30px;background:#b0b0b0"></div>
<div style="left:478.20px;top:363.90px;width:1.20px;height:8.00px;background:#8c8c8c"></div>
<div style="left:479.50px;top:363.90px;width:0.80px;height:8.00px;background:#ececec"></div>
<div style="left:529.80px;top:363.90px;width:1.00px;height:67.30px;background:#b0b0b0"></div>
<div style="left:529.70px;top:363.90px;width:1.20px;height:8.00px;background:#8c8c8c"></div>
<div style="left:531.00px;top:363.90px;width:0.80px;height:8.00px;background:#ececec"></div>
<div style="left:561.90px;top:363.90px;width:1.00px;height:67.30px;background:#b0b0b0"></div>
<div style="left:561.80px;top:363.90px;width:1.20px;height:8.00px;background:#8c8c8c"></div>
<div style="left:563.10px;top:363.90px;width:0.80px;height:8.00px;background:#ececec"></div>
<div style="left:78.30px;top:431.20px;width:604.90px;height:7.00px;background:#b6b6b6;border-top:1px solid #8a8a8a"></div>
<div style="left:84.90px;top:431.20px;width:287.70px;height:7.00px;background:linear-gradient(#d0d0d0,#c4c4c4 60%,#a8a8a8);border-right:1px solid #707070;border-bottom:1px solid #6a6a6a"></div>
<div style="left:78.30px;top:431.40px;width:6.60px;height:6.80px;background:linear-gradient(#e6e6e6,#cacaca);border:0.6px solid #9a9a9a;border-right-color:#7a7a7a;border-bottom-color:#7a7a7a"></div>
<svg style="left:78.3px;top:431.4px" width="6.6" height="6.8"><path d="M4.6 1.4L1.8 3.4L4.6 5.4z" fill="#111"/></svg>
<div style="left:676.40px;top:431.40px;width:6.80px;height:6.80px;background:linear-gradient(#e6e6e6,#cacaca);border:0.6px solid #9a9a9a;border-right-color:#7a7a7a;border-bottom-color:#7a7a7a"></div>
<svg style="left:676.4px;top:431.4px" width="6.8" height="6.8"><path d="M2.2 1.4L5 3.4L2.2 5.4z" fill="#111"/></svg>
<div style="left:683.60px;top:364.00px;width:6.60px;height:6.40px;background:linear-gradient(#e6e6e6,#cacaca);border:0.6px solid #9a9a9a;border-right-color:#7a7a7a;border-bottom-color:#7a7a7a"></div>
<svg style="left:683.6px;top:364px" width="6.6" height="6.4"><path d="M1.3 4.6L3.3 1.8L5.3 4.6z" fill="#111"/></svg>
<div style="left:683.60px;top:424.60px;width:6.60px;height:6.40px;background:linear-gradient(#e6e6e6,#cacaca);border:0.6px solid #9a9a9a;border-right-color:#7a7a7a;border-bottom-color:#7a7a7a"></div>
<svg style="left:683.6px;top:424.6px" width="6.6" height="6.4"><path d="M1.3 1.8L3.3 4.6L5.3 1.8z" fill="#111"/></svg>
<svg style="left:0;top:0;will-change:transform" width="700" height="445" font-family="Liberation Sans"><defs><clipPath id="col0"><rect x="78.00" y="363" width="38.10" height="68"/></clipPath><clipPath id="col1"><rect x="117.40" y="363" width="29.00" height="68"/></clipPath><clipPath id="col2"><rect x="147.70" y="363" width="122.20" height="68"/></clipPath><clipPath id="col3"><rect x="271.20" y="363" width="30.80" height="68"/></clipPath><clipPath id="col4"><rect x="303.30" y="363" width="24.80" height="68"/></clipPath><clipPath id="col5"><rect x="329.40" y="363" width="17.60" height="68"/></clipPath><clipPath id="col6"><rect x="348.30" y="363" width="21.40" height="68"/></clipPath><clipPath id="col7"><rect x="371.00" y="363" width="23.70" height="68"/></clipPath><clipPath id="col8"><rect x="396.00" y="363" width="30.30" height="68"/></clipPath><clipPath id="col9"><rect x="427.60" y="363" width="26.70" height="68"/></clipPath><clipPath id="col10"><rect x="455.60" y="363" width="22.60" height="68"/></clipPath><clipPath id="col11"><rect x="479.50" y="363" width="50.20" height="68"/></clipPath><clipPath id="col12"><rect x="531.00" y="363" width="30.80" height="68"/></clipPath><clipPath id="col13"><rect x="563.10" y="363" width="119.50" height="68"/></clipPath></defs>
<text x="26.60" y="9.00" font-size="6.00" fill="#ffffff" font-weight="bold" textLength="117.00" lengthAdjust="spacingAndGlyphs">Manufacturing Engine Cold Test -- DataViewer</text>
<text x="4.60" y="19.00" font-size="5.50" fill="#000" textLength="6.41" lengthAdjust="spacingAndGlyphs">File</text>
<text x="16.00" y="19.00" font-size="5.50" fill="#000" textLength="7.99" lengthAdjust="spacingAndGlyphs">Edit</text>
<text x="29.00" y="19.00" font-size="5.50" fill="#000" textLength="8.70" lengthAdjust="spacingAndGlyphs">View</text>
<text x="43.00" y="19.00" font-size="5.50" fill="#000" textLength="14.31" lengthAdjust="spacingAndGlyphs">Project</text>
<text x="62.00" y="19.00" font-size="5.50" fill="#000" textLength="16.59" lengthAdjust="spacingAndGlyphs">Operate</text>
<text x="84.00" y="19.00" font-size="5.50" fill="#000" textLength="10.00" lengthAdjust="spacingAndGlyphs">Tools</text>
<text x="99.40" y="19.00" font-size="5.50" fill="#000" textLength="15.59" lengthAdjust="spacingAndGlyphs">Window</text>
<text x="120.00" y="19.00" font-size="5.50" fill="#000" textLength="9.01" lengthAdjust="spacingAndGlyphs">Help</text>
<text x="6.40" y="39.00" font-size="5.60" fill="#111" textLength="19.28" lengthAdjust="spacingAndGlyphs">Raw Data</text>
<text x="35.10" y="40.00" font-size="5.60" fill="#111" textLength="25.87" lengthAdjust="spacingAndGlyphs">internal data</text>
<text x="69.00" y="40.00" font-size="5.60" fill="#111" textLength="21.99" lengthAdjust="spacingAndGlyphs">TDMS data</text>
<text x="99.00" y="40.00" font-size="5.60" fill="#111" textLength="13.01" lengthAdjust="spacingAndGlyphs">Debug</text>
<text x="14.60" y="55.00" font-size="5.90" fill="#111" textLength="19.69" lengthAdjust="spacingAndGlyphs">Test List</text>
<text x="42.80" y="55.00" font-size="5.90" fill="#111" textLength="30.11" lengthAdjust="spacingAndGlyphs">Signal Graph</text>
<text x="80.50" y="54.00" font-size="5.90" fill="#111" textLength="27.49" lengthAdjust="spacingAndGlyphs">Mask Limits</text>
<text x="23.20" y="77.00" font-size="7.00" fill="#0a0a0a" textLength="38.89" lengthAdjust="spacingAndGlyphs">Mask File Path</text>
<text x="29.00" y="86.00" font-size="5.00" fill="#0a0a0a" textLength="37.01" lengthAdjust="spacingAndGlyphs">C:\Documents and</text>
<text x="29.00" y="92.00" font-size="5.00" fill="#0a0a0a" textLength="38.79" lengthAdjust="spacingAndGlyphs">Settings\brenth\My</text>
<text x="29.00" y="97.00" font-size="5.00" fill="#0a0a0a" textLength="41.01" lengthAdjust="spacingAndGlyphs">Documents\personal</text>
<text x="25.80" y="179.00" font-size="7.00" fill="#0a0a0a" textLength="62.20" lengthAdjust="spacingAndGlyphs">Mask Generation Mode</text>
<text x="27.90" y="187.00" font-size="5.00" fill="#000" textLength="38.40" lengthAdjust="spacingAndGlyphs">Mean +/- Constant</text>
<text x="27.00" y="201.00" font-size="7.00" fill="#0a0a0a" textLength="23.99" lengthAdjust="spacingAndGlyphs">Constant</text>
<text x="28.40" y="209.00" font-size="5.60" fill="#000">0</text>
<text x="27.20" y="221.00" font-size="7.00" fill="#0a0a0a" textLength="27.31" lengthAdjust="spacingAndGlyphs"># Std Dev</text>
<text x="28.40" y="228.60" font-size="5.60" fill="#000">0</text>
<text x="26.20" y="240.00" font-size="7.00" fill="#0a0a0a" textLength="28.79" lengthAdjust="spacingAndGlyphs">Percent %</text>
<text x="28.40" y="248.60" font-size="5.60" fill="#000">0</text>
<text x="21.40" y="290.00" font-size="5.50" fill="#111" textLength="44.58" lengthAdjust="spacingAndGlyphs">Load Existing Mask</text>
<text x="27.90" y="308.00" font-size="5.50" fill="#111" textLength="31.21" lengthAdjust="spacingAndGlyphs">Export Masks</text>
<text x="24.70" y="326.00" font-size="5.50" fill="#111" textLength="37.61" lengthAdjust="spacingAndGlyphs">Generate Masks</text>
<text x="21.90" y="344.00" font-size="5.50" fill="#111" textLength="43.91" lengthAdjust="spacingAndGlyphs">Save Masks to File</text>
<text x="21.90" y="372.00" font-size="5.50" fill="#111" textLength="41.29" lengthAdjust="spacingAndGlyphs">Remove Selected</text>
<text x="31.40" y="388.00" font-size="5.50" fill="#111" textLength="21.59" lengthAdjust="spacingAndGlyphs">Clear List</text>
<text x="30.00" y="403.00" font-size="5.50" fill="#111" textLength="24.70" lengthAdjust="spacingAndGlyphs">Export List</text>
<text x="30.40" y="419.00" font-size="5.50" fill="#111" textLength="24.30" lengthAdjust="spacingAndGlyphs">Edit Setup</text>
<text x="38.50" y="434.00" font-size="5.50" fill="#111" textLength="7.71" lengthAdjust="spacingAndGlyphs">Exit</text>
<text x="102.84" y="338.80" font-size="5.00" fill="#3a3a3a" textLength="6.36" lengthAdjust="spacingAndGlyphs">-25</text>
<text x="102.84" y="331.00" font-size="5.00" fill="#3a3a3a" textLength="6.36" lengthAdjust="spacingAndGlyphs">-20</text>
<text x="102.84" y="323.20" font-size="5.00" fill="#3a3a3a" textLength="6.36" lengthAdjust="spacingAndGlyphs">-15</text>
<text x="102.84" y="315.40" font-size="5.00" fill="#3a3a3a" textLength="6.36" lengthAdjust="spacingAndGlyphs">-10</text>
<text x="105.28" y="307.60" font-size="5.00" fill="#3a3a3a" textLength="3.91" lengthAdjust="spacingAndGlyphs">-5</text>
<text x="106.76" y="299.80" font-size="5.00" fill="#3a3a3a" textLength="2.45" lengthAdjust="spacingAndGlyphs">0</text>
<text x="106.76" y="292.00" font-size="5.00" fill="#3a3a3a" textLength="2.45" lengthAdjust="spacingAndGlyphs">5</text>
<text x="104.32" y="284.20" font-size="5.00" fill="#3a3a3a" textLength="4.89" lengthAdjust="spacingAndGlyphs">10</text>
<text x="104.32" y="276.40" font-size="5.00" fill="#3a3a3a" textLength="4.89" lengthAdjust="spacingAndGlyphs">15</text>
<text x="104.32" y="268.60" font-size="5.00" fill="#3a3a3a" textLength="4.89" lengthAdjust="spacingAndGlyphs">20</text>
<text x="104.32" y="260.80" font-size="5.00" fill="#3a3a3a" textLength="4.89" lengthAdjust="spacingAndGlyphs">25</text>
<text x="104.32" y="253.00" font-size="5.00" fill="#3a3a3a" textLength="4.89" lengthAdjust="spacingAndGlyphs">30</text>
<text x="104.32" y="245.20" font-size="5.00" fill="#3a3a3a" textLength="4.89" lengthAdjust="spacingAndGlyphs">35</text>
<text x="104.32" y="237.40" font-size="5.00" fill="#3a3a3a" textLength="4.89" lengthAdjust="spacingAndGlyphs">40</text>
<text x="104.32" y="229.60" font-size="5.00" fill="#3a3a3a" textLength="4.89" lengthAdjust="spacingAndGlyphs">45</text>
<text x="104.32" y="221.80" font-size="5.00" fill="#3a3a3a" textLength="4.89" lengthAdjust="spacingAndGlyphs">50</text>
<text x="104.32" y="214.00" font-size="5.00" fill="#3a3a3a" textLength="4.89" lengthAdjust="spacingAndGlyphs">55</text>
<text x="104.32" y="206.20" font-size="5.00" fill="#3a3a3a" textLength="4.89" lengthAdjust="spacingAndGlyphs">60</text>
<text x="104.32" y="198.40" font-size="5.00" fill="#3a3a3a" textLength="4.89" lengthAdjust="spacingAndGlyphs">65</text>
<text x="104.32" y="190.60" font-size="5.00" fill="#3a3a3a" textLength="4.89" lengthAdjust="spacingAndGlyphs">70</text>
<text x="104.32" y="182.80" font-size="5.00" fill="#3a3a3a" textLength="4.89" lengthAdjust="spacingAndGlyphs">75</text>
<text x="104.32" y="175.00" font-size="5.00" fill="#3a3a3a" textLength="4.89" lengthAdjust="spacingAndGlyphs">80</text>
<text x="104.32" y="167.20" font-size="5.00" fill="#3a3a3a" textLength="4.89" lengthAdjust="spacingAndGlyphs">85</text>
<text x="104.32" y="159.40" font-size="5.00" fill="#3a3a3a" textLength="4.89" lengthAdjust="spacingAndGlyphs">90</text>
<text x="104.32" y="151.60" font-size="5.00" fill="#3a3a3a" textLength="4.89" lengthAdjust="spacingAndGlyphs">95</text>
<text x="101.85" y="143.80" font-size="5.00" fill="#3a3a3a" textLength="7.34" lengthAdjust="spacingAndGlyphs">100</text>
<text x="101.85" y="136.00" font-size="5.00" fill="#3a3a3a" textLength="7.34" lengthAdjust="spacingAndGlyphs">105</text>
<text x="102.18" y="128.20" font-size="5.00" fill="#3a3a3a" textLength="7.01" lengthAdjust="spacingAndGlyphs">110</text>
<text x="102.18" y="120.40" font-size="5.00" fill="#3a3a3a" textLength="7.01" lengthAdjust="spacingAndGlyphs">115</text>
<text x="101.85" y="112.60" font-size="5.00" fill="#3a3a3a" textLength="7.34" lengthAdjust="spacingAndGlyphs">120</text>
<text x="101.85" y="104.80" font-size="5.00" fill="#3a3a3a" textLength="7.34" lengthAdjust="spacingAndGlyphs">125</text>
<text x="101.85" y="97.00" font-size="5.00" fill="#3a3a3a" textLength="7.34" lengthAdjust="spacingAndGlyphs">130</text>
<text x="101.85" y="89.20" font-size="5.00" fill="#3a3a3a" textLength="7.34" lengthAdjust="spacingAndGlyphs">135</text>
<text x="101.85" y="81.40" font-size="5.00" fill="#3a3a3a" textLength="7.34" lengthAdjust="spacingAndGlyphs">140</text>
<text x="101.85" y="73.60" font-size="5.00" fill="#3a3a3a" textLength="7.34" lengthAdjust="spacingAndGlyphs">145</text>
<text x="101.85" y="65.80" font-size="5.00" fill="#3a3a3a" textLength="7.34" lengthAdjust="spacingAndGlyphs">150</text>
<text x="105.36" y="345.00" font-size="4.90" fill="#3a3a3a" textLength="15.29" lengthAdjust="spacingAndGlyphs">-200.00</text>
<text x="126.95" y="345.00" font-size="4.90" fill="#3a3a3a" textLength="15.29" lengthAdjust="spacingAndGlyphs">-175.00</text>
<text x="148.54" y="345.00" font-size="4.90" fill="#3a3a3a" textLength="15.29" lengthAdjust="spacingAndGlyphs">-150.00</text>
<text x="170.13" y="345.00" font-size="4.90" fill="#3a3a3a" textLength="15.29" lengthAdjust="spacingAndGlyphs">-125.00</text>
<text x="191.72" y="345.00" font-size="4.90" fill="#3a3a3a" textLength="15.29" lengthAdjust="spacingAndGlyphs">-100.00</text>
<text x="214.57" y="345.00" font-size="4.90" fill="#3a3a3a" textLength="12.78" lengthAdjust="spacingAndGlyphs">-75.00</text>
<text x="236.16" y="345.00" font-size="4.90" fill="#3a3a3a" textLength="12.78" lengthAdjust="spacingAndGlyphs">-50.00</text>
<text x="257.75" y="345.00" font-size="4.90" fill="#3a3a3a" textLength="12.78" lengthAdjust="spacingAndGlyphs">-25.00</text>
<text x="281.35" y="345.00" font-size="4.90" fill="#3a3a3a" textLength="8.77" lengthAdjust="spacingAndGlyphs">0.00</text>
<text x="301.68" y="345.00" font-size="4.90" fill="#3a3a3a" textLength="11.28" lengthAdjust="spacingAndGlyphs">25.00</text>
<text x="323.27" y="345.00" font-size="4.90" fill="#3a3a3a" textLength="11.28" lengthAdjust="spacingAndGlyphs">50.00</text>
<text x="344.86" y="345.00" font-size="4.90" fill="#3a3a3a" textLength="11.28" lengthAdjust="spacingAndGlyphs">75.00</text>
<text x="365.20" y="345.00" font-size="4.90" fill="#3a3a3a" textLength="13.79" lengthAdjust="spacingAndGlyphs">100.00</text>
<text x="386.79" y="345.00" font-size="4.90" fill="#3a3a3a" textLength="13.79" lengthAdjust="spacingAndGlyphs">125.00</text>
<text x="408.38" y="345.00" font-size="4.90" fill="#3a3a3a" textLength="13.79" lengthAdjust="spacingAndGlyphs">150.00</text>
<text x="429.97" y="345.00" font-size="4.90" fill="#3a3a3a" textLength="13.79" lengthAdjust="spacingAndGlyphs">175.00</text>
<text x="451.56" y="345.00" font-size="4.90" fill="#3a3a3a" textLength="13.79" lengthAdjust="spacingAndGlyphs">200.00</text>
<text x="473.15" y="345.00" font-size="4.90" fill="#3a3a3a" textLength="13.79" lengthAdjust="spacingAndGlyphs">225.00</text>
<text x="494.75" y="345.00" font-size="4.90" fill="#3a3a3a" textLength="13.79" lengthAdjust="spacingAndGlyphs">250.00</text>
<text x="516.34" y="345.00" font-size="4.90" fill="#3a3a3a" textLength="13.79" lengthAdjust="spacingAndGlyphs">275.00</text>
<text x="537.93" y="345.00" font-size="4.90" fill="#3a3a3a" textLength="13.79" lengthAdjust="spacingAndGlyphs">300.00</text>
<text x="559.52" y="345.00" font-size="4.90" fill="#3a3a3a" textLength="13.79" lengthAdjust="spacingAndGlyphs">325.00</text>
<text x="581.11" y="345.00" font-size="4.90" fill="#3a3a3a" textLength="13.79" lengthAdjust="spacingAndGlyphs">350.00</text>
<text x="602.70" y="345.00" font-size="4.90" fill="#3a3a3a" textLength="13.79" lengthAdjust="spacingAndGlyphs">375.00</text>
<text x="0" y="0" font-size="5.0" fill="#2a2a2a" textLength="12.8" lengthAdjust="spacingAndGlyphs" transform="translate(100.7 206.8) rotate(-90)">Values</text>
<text x="240.00" y="55.00" font-size="9.60" fill="#17396a" font-weight="bold" textLength="232.89" lengthAdjust="spacingAndGlyphs">Manufacturing Engine Cold Test Data Viewer</text>
<text x="650.60" y="53.00" font-size="5.40" fill="#222" textLength="29.20" lengthAdjust="spacingAndGlyphs">Print Report</text>
<text x="632.90" y="70.00" font-size="5.50" fill="#1a1a1a" textLength="45.30" lengthAdjust="spacingAndGlyphs">mean_Io_PressureCyl1</text>
<text x="635.30" y="79.00" font-size="5.50" fill="#1a1a1a" textLength="42.89" lengthAdjust="spacingAndGlyphs">max_Io_PressureCyl1</text>
<text x="636.90" y="88.00" font-size="5.50" fill="#1a1a1a" textLength="41.30" lengthAdjust="spacingAndGlyphs">min_Io_PressureCyl1</text>
<text x="623.00" y="96.00" font-size="5.50" fill="#1a1a1a" textLength="55.20" lengthAdjust="spacingAndGlyphs">12345678 - Io_PressureCyl1</text>
<text x="623.00" y="105.00" font-size="5.50" fill="#1a1a1a" textLength="55.20" lengthAdjust="spacingAndGlyphs">12345678 - Io_PressureCyl1</text>
<text x="623.00" y="114.00" font-size="5.50" fill="#1a1a1a" textLength="55.20" lengthAdjust="spacingAndGlyphs">12345678 - Io_PressureCyl1</text>
<text x="621.70" y="295.00" font-size="5.00" fill="#111" textLength="16.70" lengthAdjust="spacingAndGlyphs">Degrees</text>
<text x="621.70" y="306.00" font-size="5.00" fill="#111" textLength="12.89" lengthAdjust="spacingAndGlyphs">Values</text>
<text x="83.24" y="369.00" font-size="5.00" fill="#1e1e1e" textLength="27.51" lengthAdjust="spacingAndGlyphs" clip-path="url(#col0)">SerialNumber</text>
<text x="125.72" y="369.00" font-size="5.00" fill="#1e1e1e" textLength="12.26" lengthAdjust="spacingAndGlyphs" clip-path="url(#col1)">Model</text>
<text x="197.62" y="369.00" font-size="5.00" fill="#1e1e1e" textLength="22.26" lengthAdjust="spacingAndGlyphs" clip-path="url(#col2)">OperatorID</text>
<text x="276.17" y="369.00" font-size="5.00" fill="#1e1e1e" textLength="20.76" lengthAdjust="spacingAndGlyphs" clip-path="url(#col3)">TestGroup</text>
<text x="310.90" y="369.00" font-size="5.00" fill="#1e1e1e" textLength="9.51" lengthAdjust="spacingAndGlyphs" clip-path="url(#col4)">Date</text>
<text x="330.20" y="369.00" font-size="5.00" fill="#1e1e1e" textLength="16.51" lengthAdjust="spacingAndGlyphs" clip-path="url(#col5)">FilePath</text>
<text x="349.82" y="369.00" font-size="5.00" fill="#1e1e1e" textLength="18.26" lengthAdjust="spacingAndGlyphs" clip-path="url(#col6)">DevPoint</text>
<text x="374.54" y="369.00" font-size="5.00" fill="#1e1e1e" textLength="16.50" lengthAdjust="spacingAndGlyphs" clip-path="url(#col7)">AirTemp</text>
<text x="396.80" y="369.00" font-size="5.00" fill="#1e1e1e" textLength="30.26" lengthAdjust="spacingAndGlyphs" clip-path="url(#col8)">rometricPressu</text>
<text x="431.90" y="369.00" font-size="5.00" fill="#1e1e1e" textLength="18.01" lengthAdjust="spacingAndGlyphs" clip-path="url(#col9)">FailCode</text>
<text x="456.40" y="369.00" font-size="5.00" fill="#1e1e1e" textLength="22.76" lengthAdjust="spacingAndGlyphs" clip-path="url(#col10)">ailMessage</text>
<text x="493.29" y="369.00" font-size="5.00" fill="#1e1e1e" textLength="22.52" lengthAdjust="spacingAndGlyphs" clip-path="url(#col11)">StartSpeed</text>
<text x="531.80" y="369.00" font-size="5.00" fill="#1e1e1e" textLength="32.52" lengthAdjust="spacingAndGlyphs" clip-path="url(#col12)">StartSpeedPass</text>
<text x="611.17" y="369.00" font-size="5.00" fill="#1e1e1e" textLength="23.26" lengthAdjust="spacingAndGlyphs" clip-path="url(#col13)">StartTorque</text>
<text x="89.99" y="377.00" font-size="5.00" fill="#1e1e1e" textLength="20.02" lengthAdjust="spacingAndGlyphs" clip-path="url(#col0)">12345678</text>
<text x="120.85" y="377.00" font-size="5.00" fill="#1e1e1e" textLength="22.02" lengthAdjust="spacingAndGlyphs" clip-path="url(#col1)">BHH01234</text>
<text x="201.75" y="377.00" font-size="5.00" fill="#1e1e1e" textLength="14.01" lengthAdjust="spacingAndGlyphs" clip-path="url(#col2)">BrentH</text>
<text x="280.91" y="377.00" font-size="5.00" fill="#1e1e1e" textLength="11.25" lengthAdjust="spacingAndGlyphs" clip-path="url(#col3)">Hawk</text>
<text x="304.10" y="377.00" font-size="5.00" fill="#1e1e1e" textLength="22.52" lengthAdjust="spacingAndGlyphs" clip-path="url(#col4)">/2007  10:4</text>
<text x="330.20" y="377.00" font-size="5.00" fill="#1e1e1e" textLength="18.27" lengthAdjust="spacingAndGlyphs" clip-path="url(#col5)">old engin</text>
<text x="357.70" y="377.00" font-size="5.00" fill="#1e1e1e" textLength="2.50" lengthAdjust="spacingAndGlyphs" clip-path="url(#col6)">0</text>
<text x="381.55" y="377.00" font-size="5.00" fill="#1e1e1e" textLength="2.50" lengthAdjust="spacingAndGlyphs" clip-path="url(#col7)">0</text>
<text x="409.85" y="377.00" font-size="5.00" fill="#1e1e1e" textLength="2.50" lengthAdjust="spacingAndGlyphs" clip-path="url(#col8)">0</text>
<text x="439.65" y="377.00" font-size="5.00" fill="#1e1e1e" textLength="2.50" lengthAdjust="spacingAndGlyphs" clip-path="url(#col9)">0</text>
<text x="456.40" y="377.00" font-size="5.00" fill="#1e1e1e" textLength="23.93" lengthAdjust="spacingAndGlyphs" clip-path="url(#col10)">ngine PASS</text>
<text x="501.42" y="377.00" font-size="5.00" fill="#1e1e1e" textLength="6.26" lengthAdjust="spacingAndGlyphs" clip-path="url(#col11)">.41</text>
<text x="545.10" y="377.00" font-size="5.00" fill="#1e1e1e" textLength="2.50" lengthAdjust="spacingAndGlyphs" clip-path="url(#col12)">0</text>
<text x="617.16" y="377.00" font-size="5.00" fill="#1e1e1e" textLength="11.26" lengthAdjust="spacingAndGlyphs" clip-path="url(#col13)">26.77</text>
<text x="89.99" y="384.00" font-size="5.00" fill="#1e1e1e" textLength="20.02" lengthAdjust="spacingAndGlyphs" clip-path="url(#col0)">12345678</text>
<text x="120.85" y="384.00" font-size="5.00" fill="#1e1e1e" textLength="22.02" lengthAdjust="spacingAndGlyphs" clip-path="url(#col1)">BHH01234</text>
<text x="201.75" y="384.00" font-size="5.00" fill="#1e1e1e" textLength="14.01" lengthAdjust="spacingAndGlyphs" clip-path="url(#col2)">BrentH</text>
<text x="280.91" y="384.00" font-size="5.00" fill="#1e1e1e" textLength="11.25" lengthAdjust="spacingAndGlyphs" clip-path="url(#col3)">Hawk</text>
<text x="304.10" y="384.00" font-size="5.00" fill="#1e1e1e" textLength="22.52" lengthAdjust="spacingAndGlyphs" clip-path="url(#col4)">/2007  10:5</text>
<text x="330.20" y="384.00" font-size="5.00" fill="#1e1e1e" textLength="18.27" lengthAdjust="spacingAndGlyphs" clip-path="url(#col5)">old engin</text>
<text x="357.70" y="384.00" font-size="5.00" fill="#1e1e1e" textLength="2.50" lengthAdjust="spacingAndGlyphs" clip-path="url(#col6)">0</text>
<text x="381.55" y="384.00" font-size="5.00" fill="#1e1e1e" textLength="2.50" lengthAdjust="spacingAndGlyphs" clip-path="url(#col7)">0</text>
<text x="409.85" y="384.00" font-size="5.00" fill="#1e1e1e" textLength="2.50" lengthAdjust="spacingAndGlyphs" clip-path="url(#col8)">0</text>
<text x="439.65" y="384.00" font-size="5.00" fill="#1e1e1e" textLength="2.50" lengthAdjust="spacingAndGlyphs" clip-path="url(#col9)">0</text>
<text x="456.40" y="384.00" font-size="5.00" fill="#1e1e1e" textLength="23.93" lengthAdjust="spacingAndGlyphs" clip-path="url(#col10)">ngine PASS</text>
<text x="501.42" y="384.00" font-size="5.00" fill="#1e1e1e" textLength="6.26" lengthAdjust="spacingAndGlyphs" clip-path="url(#col11)">.73</text>
<text x="545.10" y="384.00" font-size="5.00" fill="#1e1e1e" textLength="2.50" lengthAdjust="spacingAndGlyphs" clip-path="url(#col12)">0</text>
<text x="617.16" y="384.00" font-size="5.00" fill="#1e1e1e" textLength="11.26" lengthAdjust="spacingAndGlyphs" clip-path="url(#col13)">28.33</text>
<text x="89.99" y="391.00" font-size="5.00" fill="#1e1e1e" textLength="20.02" lengthAdjust="spacingAndGlyphs" clip-path="url(#col0)">12345678</text>
<text x="120.85" y="391.00" font-size="5.00" fill="#1e1e1e" textLength="22.02" lengthAdjust="spacingAndGlyphs" clip-path="url(#col1)">BHH01234</text>
<text x="201.75" y="391.00" font-size="5.00" fill="#1e1e1e" textLength="14.01" lengthAdjust="spacingAndGlyphs" clip-path="url(#col2)">BrentH</text>
<text x="280.91" y="391.00" font-size="5.00" fill="#1e1e1e" textLength="11.25" lengthAdjust="spacingAndGlyphs" clip-path="url(#col3)">Hawk</text>
<text x="304.10" y="391.00" font-size="5.00" fill="#1e1e1e" textLength="22.19" lengthAdjust="spacingAndGlyphs" clip-path="url(#col4)">/2007  11:4</text>
<text x="330.20" y="391.00" font-size="5.00" fill="#1e1e1e" textLength="18.27" lengthAdjust="spacingAndGlyphs" clip-path="url(#col5)">old engin</text>
<text x="357.70" y="391.00" font-size="5.00" fill="#1e1e1e" textLength="2.50" lengthAdjust="spacingAndGlyphs" clip-path="url(#col6)">0</text>
<text x="381.55" y="391.00" font-size="5.00" fill="#1e1e1e" textLength="2.50" lengthAdjust="spacingAndGlyphs" clip-path="url(#col7)">0</text>
<text x="409.85" y="391.00" font-size="5.00" fill="#1e1e1e" textLength="2.50" lengthAdjust="spacingAndGlyphs" clip-path="url(#col8)">0</text>
<text x="439.65" y="391.00" font-size="5.00" fill="#1e1e1e" textLength="2.50" lengthAdjust="spacingAndGlyphs" clip-path="url(#col9)">0</text>
<text x="456.40" y="391.00" font-size="5.00" fill="#1e1e1e" textLength="23.93" lengthAdjust="spacingAndGlyphs" clip-path="url(#col10)">ngine PASS</text>
<text x="503.30" y="391.00" font-size="5.00" fill="#1e1e1e" textLength="2.50" lengthAdjust="spacingAndGlyphs" clip-path="url(#col11)">1</text>
<text x="545.10" y="391.00" font-size="5.00" fill="#1e1e1e" textLength="2.50" lengthAdjust="spacingAndGlyphs" clip-path="url(#col12)">0</text>
<text x="618.42" y="391.00" font-size="5.00" fill="#1e1e1e" textLength="8.76" lengthAdjust="spacingAndGlyphs" clip-path="url(#col13)">26.3</text></svg>
</body></html>
